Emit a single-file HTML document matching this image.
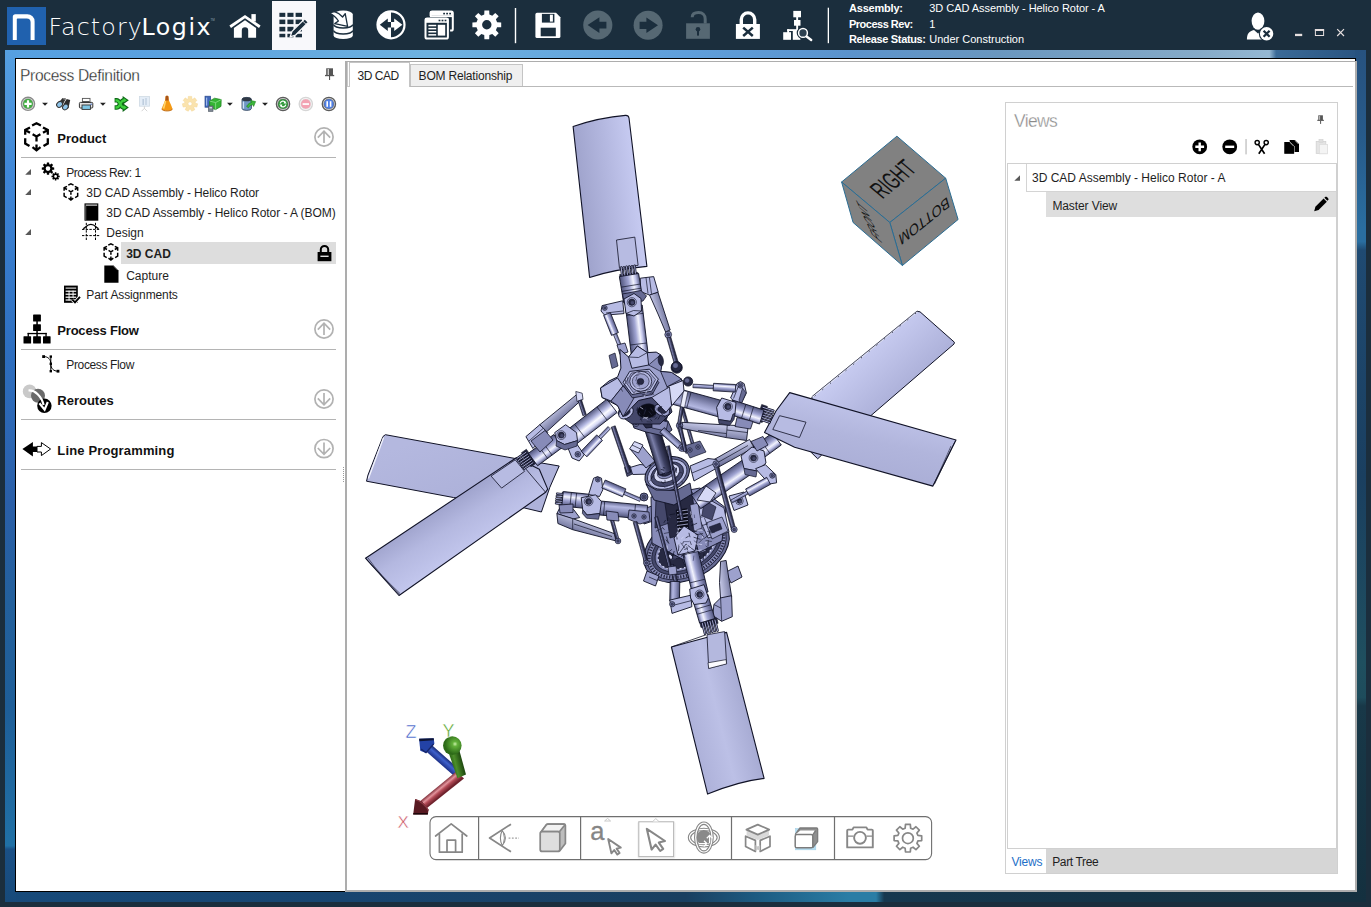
<!DOCTYPE html>
<html lang="en">
<head>
<meta charset="utf-8">
<title>FactoryLogix - Process Definition</title>
<style>
html,body{margin:0;padding:0;}
body{width:1371px;height:907px;overflow:hidden;background:#1b2e3d;font-family:"Liberation Sans",sans-serif;font-size:12px;color:#1e1e1e;}
#app{position:relative;width:1371px;height:907px;overflow:hidden;background:#1b2e3d;}
.abs{position:absolute;}
.t{position:absolute;white-space:nowrap;line-height:16px;}
svg{position:absolute;overflow:visible;}
/* window frame (glass band) */
#band-top{left:5px;top:50px;width:1361px;height:9px;background:linear-gradient(90deg,#56a0e1 0,#5aa1df 12%,#6eb2e0 31%,#5f9fdb 50%,#5b93cc 62%,#6a97bf 73%,#86abc8 88%,#95b8d3 92.9%,#3b6a97 93.4%,#27527f 100%);}
#band-left{left:5px;top:50px;width:11px;height:852px;background:linear-gradient(180deg,#56a0e1 0,#3f86d6 15%,#2e6fc0 35%,#2a5fa8 53%,#23609c 65%,#1e5e98 77%,#2070a5 93.4%,#1a5086 93.8%,#174a7a 100%);}
#band-right{left:1355px;top:50px;width:11px;height:852px;background:linear-gradient(180deg,#27527f 0,#275a8a 10%,#2a6ea0 21%,#2a6ea0 22.5%,#1f4a72 23.5%,#1a3f60 50%,#1f4f5f 72%,#1e4c5c 76%,#183848 77%,#14303f 100%);}
#band-bottom{left:5px;top:891px;width:1361px;height:11px;background:linear-gradient(90deg,#174a7a 0,#184570 25%,#1a3f60 50%,#1c5a80 55%,#2a7da5 62%,#2a7da5 64%,#16384f 64.6%,#14303f 100%);}
.hb{font-weight:bold;font-size:11px;color:#fff;letter-spacing:-0.2px;}
.hv{font-size:11px;color:#fff;}
.sh{font-weight:bold;font-size:13px;color:#111;}
.tr{font-size:12px;color:#1e1e1e;}
#client{left:15px;top:58px;width:1339px;height:832px;background:#fff;border:1px solid #000;}
</style>
</head>
<body>
<div id="app">
<div id="band-top" class="abs"></div>
<div id="band-bottom" class="abs"></div>
<div id="band-left" class="abs"></div>
<div id="band-right" class="abs"></div>
<div id="client" class="abs"></div>
<!--HEADER-->
<div class="abs" style="left:7px;top:7px;width:39px;height:38px;background:#2061ae;"></div>
<div class="abs" style="left:272px;top:1px;width:44px;height:49px;background:#f8f8fb;"></div>
<div class="t" id="lg1" style="left:48.4px;top:10.9px;line-height:32px;font-family:'DejaVu Sans Light','DejaVu Sans',sans-serif;font-weight:200;font-size:23.7px;color:#fff;letter-spacing:1.15px;">Factory</div>
<div class="t" id="lg2" style="left:141.5px;top:10.9px;line-height:32px;font-family:'DejaVu Sans',sans-serif;font-size:23.7px;color:#fff;letter-spacing:1.55px;">Logix</div>
<div class="t" style="left:210.5px;top:16.5px;line-height:6px;font-size:3px;color:#8fa0ad;">TM</div>
<div class="t hb" id="h1" style="left:849px;top:0px;">Assembly:</div>
<div class="t hb" id="h2" style="left:849px;top:15.6px;letter-spacing:-0.5px;">Process Rev:</div>
<div class="t hb" id="h3" style="left:849px;top:30.6px;letter-spacing:-0.35px;">Release Status:</div>
<div class="t hv" id="h4" style="left:929.3px;top:0px;letter-spacing:-0.05px;">3D CAD Assembly - Helico Rotor - A</div>
<div class="t hv" id="h5" style="left:929.3px;top:15.6px;">1</div>
<div class="t hv" id="h6" style="left:929.3px;top:30.6px;">Under Construction</div>
<svg id="hdr" width="1371" height="50" viewBox="0 0 1371 50" style="left:0;top:0;">
<g fill="#fff" stroke="none">
<!-- logo n -->
<path d="M12.8,40 V16.8 A2.6,2.6 0 0 1 15.4,14.2 H27.4 A7.2,7.2 0 0 1 34.6,21.4 V40 H30.6 V22.2 A3.8,3.8 0 0 0 26.8,18.4 H17.6 A0.8,0.8 0 0 0 16.8,19.2 V40 Z"/>
<!-- home -->
<path d="M245,14.9 L260.6,25.6 L259,27.9 L245,18.2 L231,27.9 L229.4,25.6 Z"/>
<rect x="251.4" y="14.1" width="4.4" height="7.4"/>
<path d="M233.9,28 L245,20.3 L256.1,28 V37.7 H248.2 V30.4 A3.2,3.2 0 0 0 241.8,30.4 V37.7 H233.9 Z"/>
<!-- db -->
<path d="M333.6,14.2 A9.6,3.6 0 0 1 352.8,14.2 V35.4 A9.6,3.6 0 0 1 333.6,35.4 Z"/>
<!-- circle arrows -->
<path d="M391,10.2 A14.6,14.6 0 0 0 391,39.4 Z"/>
<path d="M391,11.3 A13.5,13.5 0 0 1 391,38.3" fill="none" stroke="#fff" stroke-width="2.2"/>
<path d="M402.4,24.8 L394.2,18.6 V22 H391 V27.6 H394.2 V31 Z"/>
<!-- gear -->
<path fill-rule="evenodd" d="M484.24,14.51 L484.40,10.40 L489.20,10.40 L489.36,14.51 L492.27,15.72 L495.29,12.92 L498.68,16.31 L495.88,19.33 L497.09,22.24 L501.20,22.40 L501.20,27.20 L497.09,27.36 L495.88,30.27 L498.68,33.29 L495.29,36.68 L492.27,33.88 L489.36,35.09 L489.20,39.20 L484.40,39.20 L484.24,35.09 L481.33,33.88 L478.31,36.68 L474.92,33.29 L477.72,30.27 L476.51,27.36 L472.40,27.20 L472.40,22.40 L476.51,22.24 L477.72,19.33 L474.92,16.31 L478.31,12.92 L481.33,15.72Z M491.5,24.8 A4.7,4.7 0 1 0 482.1,24.8 A4.7,4.7 0 1 0 491.5,24.8Z"/>
<!-- separators -->
<rect x="514.8" y="8" width="1.4" height="35.2"/>
<rect x="827.7" y="7.7" width="1.3" height="35.5"/>
<!-- save -->
<path d="M537,12.8 H556 L560.4,17.2 V36.4 A1.6,1.6 0 0 1 558.8,38 H537 A1.6,1.6 0 0 1 535.4,36.4 V14.4 A1.6,1.6 0 0 1 537,12.8 Z"/>
<!-- lock-x -->
<rect x="735.9" y="24" width="24" height="14.9"/>
<path d="M741.3,24.5 V19.6 A6.7,6.7 0 0 1 754.7,19.6 V24.5" fill="none" stroke="#fff" stroke-width="3.4"/>
<!-- flow search -->
<rect x="793.3" y="10.9" width="7.7" height="6.4"/>
<rect x="796.2" y="17" width="1.9" height="14"/>
<rect x="794" y="20" width="6.5" height="5.7"/>
<rect x="787.2" y="29.2" width="11" height="1.8"/>
<rect x="787.2" y="29.2" width="1.9" height="4"/>
<rect x="783.2" y="32.2" width="7.8" height="7.6"/>
<rect x="792.8" y="30.6" width="7.6" height="9.2"/>
<!-- user -->
<ellipse cx="1258" cy="21.1" rx="6.4" ry="8.7"/>
<path d="M1246.9,39.6 C1247.2,33 1249,31.5 1254,30 L1258,33.5 L1262,30 C1266,31.3 1268,33 1268.5,39.6 Z"/>
</g>
<!-- dark details -->
<g fill="#1b2e3d" stroke="none">
<!-- grid -->
<rect x="279.4" y="12.8" width="5.9" height="4.1"/><rect x="287.4" y="12.8" width="6.1" height="4.1"/><rect x="295.6" y="12.8" width="6.4" height="4.1"/>
<rect x="279.4" y="19.6" width="5.9" height="4.5"/><rect x="287.4" y="19.6" width="6.1" height="4.5"/><rect x="295.6" y="19.6" width="6.4" height="4.5"/>
<rect x="279.4" y="26.8" width="5.9" height="4.6"/><rect x="287.4" y="26.8" width="6.1" height="4.6"/><rect x="295.6" y="26.8" width="6.4" height="4.6"/>
<rect x="279.4" y="33.8" width="5.9" height="3.5"/><rect x="287.4" y="33.8" width="6.1" height="3.5"/><rect x="295.6" y="33.8" width="6.4" height="3.5"/>
<!-- circle arrows left arrow -->
<path d="M379.8,24.8 L387.8,18.6 V22 H391 V27.6 H387.8 V31 Z"/>
<!-- save details -->
<rect x="541.9" y="13.9" width="12.5" height="8.7"/>
<rect x="540.7" y="27.7" width="15.1" height="8.6"/>
<!-- lock x -->
<path d="M743.2,27.6 L752.8,36 M752.8,27.6 L743.2,36" stroke="#1b2e3d" stroke-width="2.5" fill="none"/>
</g>
<rect x="549.9" y="14.7" width="3" height="6.9" fill="#fff"/>
<!-- pencil -->
<path d="M290.2,36.8 L292,31.4 L304.8,18.8 L308.4,22.2 L295.6,35 Z" fill="#1b2e3d" stroke="#f8f8fb" stroke-width="1.3" stroke-linejoin="round"/>
<path d="M302.6,21 L306.2,24.4" stroke="#f8f8fb" stroke-width="0.8"/>
<!-- db bands + arrow -->
<path d="M333.6,24.6 A9.6,3.4 0 0 0 352.8,24.6 M333.6,30.6 A9.6,3.4 0 0 0 352.8,30.6" fill="none" stroke="#1b2e3d" stroke-width="1.5"/>
<path d="M329.4,12.9 L334.6,11.6 C338,12.6 340.6,14.6 342.6,17 L345.2,13.6 L347.6,26.4 L334.8,23.6 L338.4,21 C336.8,18.2 334,15.6 329.4,12.9 Z" fill="#fff" stroke="#1b2e3d" stroke-width="1.3" stroke-linejoin="round"/>
<!-- windows -->
<g stroke="#fff" stroke-width="2" fill="#1b2e3d">
<rect x="430.6" y="11.5" width="22.2" height="19" rx="1.6"/>
<rect x="425.5" y="18.5" width="22.4" height="20" rx="1.6" stroke="#1b2e3d" stroke-width="4.4"/>
<rect x="425.5" y="18.5" width="22.4" height="20" rx="1.6"/>
</g>
<g fill="#fff">
<rect x="430" y="15.6" width="23" height="1.5"/>
<rect x="443.2" y="12.6" width="1.8" height="1.6" fill="#1b2e3d"/><rect x="446.2" y="12.6" width="1.8" height="1.6" fill="#1b2e3d"/><rect x="449.2" y="12.6" width="1.8" height="1.6" fill="#1b2e3d"/>
<rect x="430" y="11.2" width="23" height="4.6"/>
<rect x="443.2" y="12.8" width="1.8" height="1.6" fill="#1b2e3d"/><rect x="446.2" y="12.8" width="1.8" height="1.6" fill="#1b2e3d"/><rect x="449.2" y="12.8" width="1.8" height="1.6" fill="#1b2e3d"/>
<rect x="425" y="18" width="23.4" height="4.8"/>
<rect x="438.6" y="19.7" width="1.8" height="1.6" fill="#1b2e3d"/><rect x="441.6" y="19.7" width="1.8" height="1.6" fill="#1b2e3d"/><rect x="444.6" y="19.7" width="1.8" height="1.6" fill="#1b2e3d"/>
<rect x="428.4" y="24.8" width="7.8" height="1.5"/><rect x="428.4" y="27.9" width="7.8" height="1.5"/><rect x="428.4" y="31" width="7.8" height="1.5"/><rect x="428.4" y="34.1" width="7.8" height="1.5"/>
<rect x="437.8" y="24.8" width="7.4" height="10.8"/>
</g>
<!-- back / forward (disabled) -->
<g fill="#566873">
<circle cx="597.8" cy="25" r="14.6"/>
<circle cx="648.1" cy="25.3" r="14.5"/>
<rect x="686.1" y="23.3" width="23.8" height="15.5"/>
<path d="M692.2,17.2 C692.2,13.4 695.4,12.6 698.6,12.6 C702.6,12.6 705.2,15 705.2,19 V23.6" fill="none" stroke="#566873" stroke-width="3"/>
</g>
<g fill="#1b2e3d">
<path d="M587.6,25.1 L599.4,17.3 V21.8 H606.4 V28.5 H599.4 V32.9 Z"/>
<path d="M658,25.3 L646.4,17.6 V21.7 H639.6 V29 H646.4 V33 Z"/>
<circle cx="698" cy="29.2" r="2.3"/><rect x="697" y="29.2" width="2" height="6.4"/>
</g>
<!-- magnifier -->
<circle cx="803" cy="32.9" r="5.2" fill="#1b2e3d" stroke="#1b2e3d" stroke-width="2.2"/>
<path d="M806.4,36.4 L811.6,40.4" stroke="#1b2e3d" stroke-width="4.6" stroke-linecap="round"/>
<circle cx="803" cy="32.9" r="4.4" fill="#2c4050" stroke="#fff" stroke-width="1.5"/>
<path d="M806.6,36.5 L811.2,40" stroke="#fff" stroke-width="2.4" stroke-linecap="round"/>
<!-- user badge -->
<circle cx="1266.6" cy="33.7" r="7.8" fill="#1b2e3d"/>
<circle cx="1266.6" cy="33.7" r="6.7" fill="#fff"/>
<path d="M1263.6,30.7 L1269.6,36.7 M1269.6,30.7 L1263.6,36.7" stroke="#1b2e3d" stroke-width="2.3"/>
<!-- window buttons -->
<rect x="1295" y="33.8" width="7.2" height="2.3" fill="#e6dfdf"/>
<rect x="1315.4" y="29.9" width="8.2" height="5.6" fill="none" stroke="#e6dfdf" stroke-width="1"/>
<rect x="1314.9" y="29" width="9.2" height="2" fill="#e6dfdf"/>
<path d="M1337.2,29.2 L1344,36 M1344,29.2 L1337.2,36" stroke="#e6dfdf" stroke-width="1.2"/>
</svg>
<!--/HEADER-->
<!--LEFT-->
<div class="t" id="l0" style="left:20px;top:67.5px;font-size:15.6px;color:#222;-webkit-text-stroke:0.3px #fff;letter-spacing:-0.34px;">Process Definition</div>
<div class="abs" style="left:21px;top:157px;width:315px;height:1px;background:#b4b4b4;"></div>
<div class="abs" style="left:21px;top:349px;width:315px;height:1px;background:#b4b4b4;"></div>
<div class="abs" style="left:21px;top:419px;width:315px;height:1px;background:#b4b4b4;"></div>
<div class="abs" style="left:21px;top:469px;width:315px;height:1px;background:#b4b4b4;"></div>
<div class="abs" style="left:121px;top:242px;width:215px;height:22px;background:#dddddd;"></div>
<div class="t sh" id="l1" style="left:57.3px;top:131.1px;">Product</div>
<div class="t sh" id="l2" style="left:57.3px;top:323.1px;letter-spacing:-0.2px;">Process Flow</div>
<div class="t sh" id="l3" style="left:57.3px;top:393.1px;">Reroutes</div>
<div class="t sh" id="l4" style="left:57.3px;top:443.1px;letter-spacing:0.15px;">Line Programming</div>
<div class="t tr" id="l5" style="left:66.3px;top:165.1px;letter-spacing:-0.5px;">Process Rev: 1</div>
<div class="t tr" id="l6" style="left:86.3px;top:185.1px;letter-spacing:-0.09px;">3D CAD Assembly - Helico Rotor</div>
<div class="t tr" id="l7" style="left:106.3px;top:205.0px;letter-spacing:-0.05px;">3D CAD Assembly - Helico Rotor - A (BOM)</div>
<div class="t tr" id="l8" style="left:106.3px;top:225.0px;">Design</div>
<div class="t tr" id="l9" style="left:126.2px;top:245.6px;font-weight:bold;">3D CAD</div>
<div class="t tr" id="l10" style="left:126.2px;top:267.5px;">Capture</div>
<div class="t tr" id="l11" style="left:86.3px;top:286.6px;letter-spacing:-0.12px;">Part Assignments</div>
<div class="t tr" id="l12" style="left:66.3px;top:357.1px;letter-spacing:-0.36px;">Process Flow</div>
<svg id="lsvg" width="1371" height="907" viewBox="0 0 1371 907" style="left:0;top:0;">
<g fill="#555"><rect x="326.2" y="68.3" width="6.8" height="6.8"/><rect x="325" y="74.9" width="9.2" height="1.3"/><rect x="329" y="76" width="1.1" height="4"/><rect x="327.6" y="69" width="1.4" height="6" fill="#ccc"/></g>
<circle cx="324" cy="137" r="9.1" fill="none" stroke="#b2b2b2" stroke-width="1.7"/>
<path d="M324,143 V131.4 M317.8,137.6 L324,131.2 L330.2,137.6" fill="none" stroke="#b2b2b2" stroke-width="1.7"/>
<circle cx="324" cy="329" r="9.1" fill="none" stroke="#b2b2b2" stroke-width="1.7"/>
<path d="M324,335 V323.4 M317.8,329.6 L324,323.2 L330.2,329.6" fill="none" stroke="#b2b2b2" stroke-width="1.7"/>
<circle cx="324" cy="399" r="9.1" fill="none" stroke="#b2b2b2" stroke-width="1.7"/>
<path d="M324,393 V404.6 M317.8,398.4 L324,404.8 L330.2,398.4" fill="none" stroke="#b2b2b2" stroke-width="1.7"/>
<circle cx="324" cy="448.6" r="9.1" fill="none" stroke="#b2b2b2" stroke-width="1.7"/>
<path d="M324,442.6 V454.20000000000005 M317.8,448.0 L324,454.40000000000003 L330.2,448.0" fill="none" stroke="#b2b2b2" stroke-width="1.7"/>
<path d="M32.10,125.50 L36.50,123.20 L40.90,125.50 M30.00,127.40 L25.20,129.90 L25.20,134.70 M25.60,130.20 L30.00,132.70 M43.00,127.40 L47.80,129.90 L47.80,134.70 M47.40,130.20 L43.00,132.70 M32.60,134.30 L36.50,136.50 L40.40,134.30 M36.50,136.50 L36.50,141.60 M25.20,138.30 L25.20,143.60 L29.50,146.10 M47.80,138.30 L47.80,143.60 L43.50,146.10 M36.50,144.40 L36.50,150.20 M32.50,147.20 L36.50,150.40 L40.50,147.20" fill="none" stroke="#000" stroke-width="2.3" stroke-linejoin="miter"/>
<path d="M68.26,185.18 L70.90,183.80 L73.54,185.18 M67.00,186.32 L64.12,187.82 L64.12,190.70 M64.36,188.00 L67.00,189.50 M74.80,186.32 L77.68,187.82 L77.68,190.70 M77.44,188.00 L74.80,189.50 M68.56,190.46 L70.90,191.78 L73.24,190.46 M70.90,191.78 L70.90,194.84 M64.12,192.86 L64.12,196.04 L66.70,197.54 M77.68,192.86 L77.68,196.04 L75.10,197.54 M70.90,196.52 L70.90,200.00 M68.50,198.20 L70.90,200.12 L73.30,198.20" fill="none" stroke="#000" stroke-width="1.5" stroke-linejoin="miter"/>
<path d="M108.26,245.18 L110.90,243.80 L113.54,245.18 M107.00,246.32 L104.12,247.82 L104.12,250.70 M104.36,248.00 L107.00,249.50 M114.80,246.32 L117.68,247.82 L117.68,250.70 M117.44,248.00 L114.80,249.50 M108.56,250.46 L110.90,251.78 L113.24,250.46 M110.90,251.78 L110.90,254.84 M104.12,252.86 L104.12,256.04 L106.70,257.54 M117.68,252.86 L117.68,256.04 L115.10,257.54 M110.90,256.52 L110.90,260.00 M108.50,258.20 L110.90,260.12 L113.30,258.20" fill="none" stroke="#000" stroke-width="1.5" stroke-linejoin="miter"/>
<path d="M25.2,174.79999999999998 L31,174.79999999999998 L31,169.0 Z" fill="#595959"/>
<path d="M25.2,194.9 L31,194.9 L31,189.10000000000002 Z" fill="#595959"/>
<path d="M25.2,234.9 L31,234.9 L31,229.10000000000002 Z" fill="#595959"/>
<path d="M46.75,164.17 L46.89,162.40 L49.11,162.40 L49.25,164.17 L50.25,164.59 L51.60,163.43 L53.17,165.00 L52.01,166.35 L52.43,167.35 L54.20,167.49 L54.20,169.71 L52.43,169.85 L52.01,170.85 L53.17,172.20 L51.60,173.77 L50.25,172.61 L49.25,173.03 L49.11,174.80 L46.89,174.80 L46.75,173.03 L45.75,172.61 L44.40,173.77 L42.83,172.20 L43.99,170.85 L43.57,169.85 L41.80,169.71 L41.80,167.49 L43.57,167.35 L43.99,166.35 L42.83,165.00 L44.40,163.43 L45.75,164.59Z M50.30,168.60 A2.3,2.3 0 1 0 45.70,168.60 A2.3,2.3 0 1 0 50.30,168.60Z" fill="#000" fill-rule="evenodd"/>
<path d="M54.79,173.51 L54.86,172.27 L56.34,172.27 L56.41,173.51 L57.07,173.78 L58.00,172.95 L59.05,174.00 L58.22,174.93 L58.49,175.59 L59.73,175.66 L59.73,177.14 L58.49,177.21 L58.22,177.87 L59.05,178.80 L58.00,179.85 L57.07,179.02 L56.41,179.29 L56.34,180.53 L54.86,180.53 L54.79,179.29 L54.13,179.02 L53.20,179.85 L52.15,178.80 L52.98,177.87 L52.71,177.21 L51.47,177.14 L51.47,175.66 L52.71,175.59 L52.98,174.93 L52.15,174.00 L53.20,172.95 L54.13,173.78Z M57.00,176.40 A1.4,1.4 0 1 0 54.20,176.40 A1.4,1.4 0 1 0 57.00,176.40Z" fill="#000" fill-rule="evenodd"/>
<rect x="84.5" y="203.4" width="13.8" height="17.3" fill="#000"/><rect x="85.6" y="204.6" width="11.6" height="1" fill="#fff"/><rect x="85.4" y="206" width="0.8" height="14" fill="#777"/>
<g fill="none" stroke="#000" stroke-width="1"><path d="M86.3,222.8 V241 M95.5,222.8 V241 M82,229.4 H99.8 M82,235.6 H99.8" stroke-dasharray="2.4,1.3"/><path d="M83.2,228.6 C85.5,228 86.6,224.4 90.9,224.4 C95.2,224.4 96.3,228 98.6,228.6" stroke-width="1.2"/></g>
<path d="M104.3,265.4 H113.6 L118.5,270.4 V282.7 H104.3 Z" fill="#000"/><path d="M113.8,266.2 L117.8,270.2" stroke="#aaa" stroke-width="0.8"/>
<g><rect x="64" y="285.6" width="13.8" height="17.2" fill="#000"/><g fill="#fff"><rect x="65.6" y="287.6" width="10.6" height="1"/><rect x="65.6" y="290.6" width="10.6" height="1.2"/><rect x="65.6" y="293.6" width="10.6" height="1.2"/><rect x="65.6" y="296.6" width="10.6" height="1.2"/><rect x="65.6" y="299.4" width="6" height="1.2"/><rect x="68.6" y="290.6" width="0.9" height="10"/><rect x="72.6" y="290.6" width="0.9" height="7"/></g><path d="M72.4,299.6 L75,302.4 L80,296.8" fill="none" stroke="#fff" stroke-width="3.6"/><path d="M72.4,299.6 L75,302.4 L80,296.8" fill="none" stroke="#000" stroke-width="1.9"/></g>
<g><rect x="317.6" y="252" width="13.8" height="9.2" fill="#000"/><path d="M320.8,252.4 V249.6 A3.7,3.7 0 0 1 328.2,249.6 V252.4" fill="none" stroke="#000" stroke-width="2"/><rect x="320.4" y="255.6" width="8.2" height="1.4" fill="#ddd"/></g>
<g fill="#000"><rect x="33.1" y="314.6" width="7.8" height="6.9" rx="0.6"/><rect x="33.1" y="324.2" width="7.8" height="6.9" rx="0.6"/><rect x="36.3" y="321" width="1.5" height="16"/><rect x="27.6" y="332.9" width="19.1" height="1.3"/><rect x="27.6" y="332.9" width="1.3" height="4"/><rect x="45.4" y="332.9" width="1.3" height="4"/><rect x="23.5" y="336.2" width="7.6" height="7.4" rx="0.6"/><rect x="33.1" y="336.2" width="7.8" height="7.4" rx="0.6"/><rect x="43" y="336.2" width="7.6" height="7.4" rx="0.6"/></g>
<g fill="#000"><path d="M43.6,356.6 C48,356.6 50.8,359 50.8,363.8 C50.8,368.6 53.6,371.2 58,371.2 M50.8,356.6 V371.2" fill="none" stroke="#000" stroke-width="1"/><rect x="42.2" y="355.2" width="2.8" height="2.8"/><rect x="49.6" y="355.4" width="2.4" height="2.4"/><rect x="49.6" y="362.6" width="2.4" height="2.4"/><rect x="49.6" y="370" width="2.4" height="2.4"/><rect x="56.6" y="369.8" width="2.8" height="2.8"/></g>
<g><circle cx="29.6" cy="391.4" r="6.8" fill="#c9c9c9"/><circle cx="38" cy="395.7" r="7" fill="#6a6a6a"/><circle cx="44.4" cy="405.8" r="7.2" fill="#000"/><path d="M28.5,390.5 C35,390 41.5,396 43.6,405" fill="none" stroke="#fff" stroke-width="2.2"/><path d="M39.4,403.2 L44.6,409.6 L47.8,402" fill="none" stroke="#fff" stroke-width="2.2"/></g>
<g><path d="M22.4,449 L32.9,442 V446.4 H37 V452 H32.9 V456.4 Z" fill="#000"/><path d="M37,446.4 H41.4 V442.6 L50.6,449 L41.4,455.6 V452 H37 Z" fill="#fff" stroke="#000" stroke-width="1"/></g>
<rect x="343" y="467" width="1" height="1" fill="#999"/>
<rect x="343" y="469" width="1" height="1" fill="#999"/>
<rect x="343" y="471" width="1" height="1" fill="#999"/>
<rect x="343" y="473" width="1" height="1" fill="#999"/>
<rect x="343" y="475" width="1" height="1" fill="#999"/>
<rect x="343" y="477" width="1" height="1" fill="#999"/>
<rect x="343" y="479" width="1" height="1" fill="#999"/>
<rect x="343" y="481" width="1" height="1" fill="#999"/>
</svg>
<svg id="ltb" width="340" height="24" viewBox="16 92 340 24" style="left:16px;top:92px;">
<circle cx="28" cy="103.8" r="6.6" fill="#fff" stroke="#8a8a8a" stroke-width="1.4"/><circle cx="28" cy="103.8" r="5.1" fill="#3fae3f" stroke="#8a8a8a" stroke-width="0.6"/>
<path d="M24.4,103.8 H31.6 M28,100.2 V107.4" stroke="#fff" stroke-width="2.2"/>
<path d="M42.1,102.8 H47.9 L45,105.7 Z" fill="#222"/>
<path d="M100.0,102.8 H105.80000000000001 L102.9,105.7 Z" fill="#222"/>
<path d="M227.0,102.8 H232.8 L229.9,105.7 Z" fill="#222"/>
<path d="M262.1,102.8 H267.9 L265,105.7 Z" fill="#222"/>
<g><path d="M58.5,103 L62.5,98 L66,98.6 L62,106 Z" fill="#333"/><path d="M63.5,104.5 L66.6,99 L70.2,100 L68.5,108 Z" fill="#2b2b2b"/><ellipse cx="59.6" cy="104.4" rx="3.2" ry="2.6" transform="rotate(-40 59.6 104.4)" fill="#8ec4ea" stroke="#333" stroke-width="1"/><ellipse cx="65.4" cy="107" rx="3.1" ry="2.5" transform="rotate(-40 65.4 107)" fill="#8ec4ea" stroke="#333" stroke-width="1"/><path d="M62.8,98.6 L66.4,99.6" stroke="#999" stroke-width="1"/></g>
<g><rect x="82.4" y="98.4" width="7.6" height="5" fill="#fff" stroke="#555" stroke-width="0.9"/><rect x="79.4" y="102.4" width="13.4" height="5.6" rx="1" fill="#e4e4e4" stroke="#333" stroke-width="1"/><rect x="82" y="105" width="8.4" height="4.4" fill="#7ec7e6" stroke="#333" stroke-width="0.9"/><rect x="82.6" y="101.2" width="7" height="1.6" fill="#333"/><rect x="90.6" y="103.6" width="1.2" height="1.2" fill="#36c"/></g>
<g fill="none" stroke="#0f6a18" stroke-width="4.6"><path d="M114.6,100.3 H116.5 C120.5,100.3 120,107.5 124,107.5 M114.6,107.5 H116.5 C120.5,107.5 120,100.3 124,100.3"/></g><g fill="#0f6a18"><path d="M122.6,95.9 L128.8,100.3 L122.6,104.7 Z"/><path d="M122.6,103.1 L128.8,107.5 L122.6,111.9 Z"/></g><g fill="none" stroke="#3ccf3c" stroke-width="2.3"><path d="M115.4,100.3 H116.5 C120.5,100.3 120,107.5 124,107.5 M115.4,107.5 H116.5 C120.5,107.5 120,100.3 124,100.3"/></g><g fill="#3ccf3c"><path d="M123.6,98 L126.9,100.3 L123.6,102.6 Z"/><path d="M123.6,105.2 L126.9,107.5 L123.6,109.8 Z"/></g>
<g opacity="0.55"><rect x="139.4" y="96.6" width="10.2" height="9.6" fill="#cfe0f2" stroke="#a9bccf" stroke-width="0.8"/><rect x="142.4" y="99" width="1.6" height="6" fill="#8aa6c4"/><rect x="145.2" y="98" width="1.6" height="7" fill="#9ab2cc"/><path d="M144.4,106.2 V109 M144.4,108.4 L141.6,111.2 M144.4,108.4 L147.2,111.2" stroke="#aaa" stroke-width="0.9" fill="none"/></g>
<g><path d="M165.6,96.6 C165.6,95.6 168.4,95.6 168.4,96.6 L168.8,100 C170,103 171.6,105.4 172.4,108.8 C172.4,111.4 161.8,111.4 161.8,108.8 C162.6,105.4 164.2,103 165.2,100 Z" fill="#f59a14"/><path d="M165.6,96.4 C165.6,95.4 168.4,95.4 168.4,96.4 L168.6,100.4 H165.4 Z" fill="#a8541a"/><path d="M165.4,101 C165,104 164.2,106 163.6,108.6" stroke="#ffd56a" stroke-width="1.6" fill="none"/><path d="M161.8,108.8 C161.8,111.6 172.4,111.6 172.4,108.8" fill="none" stroke="#c26a0c" stroke-width="1"/></g>
<path d="M188.22,98.70 L188.31,96.39 L191.69,96.39 L191.78,98.70 L192.87,99.23 L194.74,97.86 L196.85,100.50 L195.10,102.02 L195.37,103.20 L197.60,103.80 L196.85,107.10 L194.57,106.67 L193.82,107.62 L194.74,109.74 L191.69,111.21 L190.60,109.17 L189.40,109.17 L188.31,111.21 L185.26,109.74 L186.18,107.62 L185.43,106.67 L183.15,107.10 L182.40,103.80 L184.63,103.20 L184.90,102.02 L183.15,100.50 L185.26,97.86 L187.13,99.23Z M192,103.8 A2,2 0 1 0 188,103.8 A2,2 0 1 0 192,103.8Z" fill="#fae3ae" fill-rule="evenodd" stroke="#f3d493" stroke-width="0.5"/>
<g><rect x="205" y="96.2" width="5.6" height="11" fill="#3f66b8" stroke="#2c4a8c" stroke-width="0.7"/><rect x="206" y="97.6" width="1.2" height="8" fill="#9db7ea"/><path d="M209.6,101 L214.6,98.2 L221.2,99.6 L221,106.4 L215.6,109.6 L209.8,107.6 Z" fill="#35b535" stroke="#1d7c1d" stroke-width="0.7"/><path d="M209.6,101 L215.6,102.6 L221.2,99.6 M215.6,102.6 V109.6" fill="none" stroke="#8de08d" stroke-width="0.8"/><rect x="208.4" y="106" width="4.6" height="5.4" fill="#7d8794" stroke="#4d5560" stroke-width="0.6"/><rect x="209.4" y="107" width="2.6" height="1.4" fill="#cfd8e2"/></g>
<g><path d="M242,99.4 A4.7,2 0 0 1 251.4,99.4 V108.4 A4.7,2 0 0 1 242,108.4 Z" fill="#6f98c6" stroke="#2d3f57" stroke-width="0.8"/><ellipse cx="246.7" cy="99.2" rx="4.7" ry="2" fill="#2f3946"/><path d="M243.4,101.6 V108.6" stroke="#cfe2f6" stroke-width="1.4"/><path d="M246.6,106.4 C248.4,103.4 250,102.8 251.4,102.6 L250.4,100.4 L255.6,101.6 L253.6,106.4 L252.6,104.6 C251,105 249.4,106 248.4,107.8 Z" fill="#3cb83c" stroke="#1d7c1d" stroke-width="0.6"/></g>
<circle cx="283" cy="104" r="6.6" fill="#fff" stroke="#5c5c5c" stroke-width="1.4"/><circle cx="283" cy="104" r="5.1" fill="#2f9a3a" stroke="#555" stroke-width="0.6"/>
<path d="M280.2,103.4 A2.9,2.9 0 0 1 285.4,102.4 M285.8,104.6 A2.9,2.9 0 0 1 280.6,105.6" fill="none" stroke="#fff" stroke-width="1.3"/><path d="M284.6,101 L286.8,103.4 L283.6,103.6 Z M281.4,107 L279.2,104.6 L282.4,104.4 Z" fill="#fff"/>
<circle cx="305.8" cy="104" r="6.6" fill="#fff" stroke="#d6d6d6" stroke-width="1.4"/><circle cx="305.8" cy="104" r="5.1" fill="#f3a3b3" stroke="#dcdcdc" stroke-width="0.6"/>
<rect x="302.6" y="103.2" width="6.4" height="1.7" fill="#fff"/>
<circle cx="328.9" cy="104" r="6.6" fill="#fff" stroke="#5c5c5c" stroke-width="1.4"/><circle cx="328.9" cy="104" r="5.1" fill="#4f7fe6" stroke="#555" stroke-width="0.6"/>
<rect x="326.4" y="101.2" width="1.6" height="5.6" fill="#fff"/><rect x="329.8" y="101.2" width="1.6" height="5.6" fill="#fff"/>
</svg>
<!--/LEFT-->
<!--CENTER-->
<div class="abs" style="left:345px;top:61px;width:1008px;height:828px;border:solid #adadad;border-width:1px 2px 2px 2px;background:#fff;box-sizing:content-box;"></div>
<div class="abs" style="left:347px;top:86px;width:1006px;height:1px;background:#b9b9b9;"></div>
<div class="abs" style="left:347px;top:62px;width:3px;height:25px;border:1px solid #c9c9c9;border-top:none;box-sizing:border-box;background:#fff;"></div>
<div class="abs" style="left:410px;top:64px;width:113px;height:22px;background:#efefef;border:1px solid #c4c4c4;border-bottom:none;box-sizing:border-box;"></div>
<div class="abs" style="left:349px;top:62px;width:61px;height:25px;background:#fff;border:1px solid #c4c4c4;border-bottom:none;box-sizing:border-box;"></div>
<div class="t" id="c1" style="left:357.6px;top:67.7px;font-size:12px;letter-spacing:-0.5px;">3D CAD</div>
<div class="t" id="c2" style="left:418.6px;top:67.7px;font-size:12px;letter-spacing:-0.2px;">BOM Relationship</div>
<!--MODEL_START--><svg id="model" width="1371" height="907" viewBox="0 0 1371 907" style="left:0;top:0;">
<defs><linearGradient id="g1" gradientUnits="userSpaceOnUse" x1="860.0" y1="350.0" x2="905.0" y2="400.0"><stop offset="0" stop-color="#c9cdf2"/><stop offset="1" stop-color="#a9add6"/></linearGradient><linearGradient id="g2" gradientUnits="userSpaceOnUse" x1="420.0" y1="440.0" x2="440.0" y2="500.0"><stop offset="0" stop-color="#b4b8df"/><stop offset="1" stop-color="#aeb2da"/></linearGradient><linearGradient id="g3" gradientUnits="userSpaceOnUse" x1="690.0" y1="720.0" x2="745.0" y2="706.0"><stop offset="0" stop-color="#aeb2da"/><stop offset="0.5" stop-color="#bcc0e6"/><stop offset="1" stop-color="#a8acd4"/></linearGradient><linearGradient id="g4" gradientUnits="userSpaceOnUse" x1="620.2" y1="502.8" x2="618.9" y2="516.8"><stop offset="0" stop-color="#5f638b"/><stop offset="0.3" stop-color="#b4b8e2"/><stop offset="0.6" stop-color="#8f93c0"/><stop offset="1" stop-color="#50547a"/></linearGradient><linearGradient id="g5" gradientUnits="userSpaceOnUse" x1="576.0" y1="492.9" x2="574.5" y2="507.3"><stop offset="0" stop-color="#5a5e87"/><stop offset="0.2" stop-color="#c2c5ea"/><stop offset="0.34" stop-color="#f2f3fd"/><stop offset="0.58" stop-color="#a1a5d3"/><stop offset="1" stop-color="#50547c"/></linearGradient><linearGradient id="g6" gradientUnits="userSpaceOnUse" x1="631.6" y1="497.9" x2="633.0" y2="494.8"><stop offset="0" stop-color="#5f638b"/><stop offset="0.3" stop-color="#b4b8e2"/><stop offset="0.6" stop-color="#8f93c0"/><stop offset="1" stop-color="#50547a"/></linearGradient><linearGradient id="g7" gradientUnits="userSpaceOnUse" x1="612.1" y1="492.4" x2="615.5" y2="484.5"><stop offset="0" stop-color="#5a5e87"/><stop offset="0.2" stop-color="#c2c5ea"/><stop offset="0.34" stop-color="#f2f3fd"/><stop offset="0.58" stop-color="#a1a5d3"/><stop offset="1" stop-color="#50547c"/></linearGradient><linearGradient id="g8" gradientUnits="userSpaceOnUse" x1="590.0" y1="518.0" x2="584.0" y2="536.0"><stop offset="0" stop-color="#d6d9f6"/><stop offset="1" stop-color="#666a93"/></linearGradient><linearGradient id="g9" gradientUnits="userSpaceOnUse" x1="616.2" y1="529.0" x2="613.0" y2="530.0"><stop offset="0" stop-color="#2b2d47"/><stop offset="0.3" stop-color="#7a7ea8"/><stop offset="0.6" stop-color="#3f4264"/><stop offset="1" stop-color="#191a2e"/></linearGradient><linearGradient id="g10" gradientUnits="userSpaceOnUse" x1="730.0" y1="445.0" x2="735.0" y2="462.0"><stop offset="0" stop-color="#d6d9f6"/><stop offset="1" stop-color="#666a93"/></linearGradient><linearGradient id="g11" gradientUnits="userSpaceOnUse" x1="728.0" y1="490.0" x2="718.7" y2="476.4"><stop offset="0" stop-color="#5a5e87"/><stop offset="0.2" stop-color="#c2c5ea"/><stop offset="0.34" stop-color="#f2f3fd"/><stop offset="0.58" stop-color="#a1a5d3"/><stop offset="1" stop-color="#50547c"/></linearGradient><linearGradient id="g12" gradientUnits="userSpaceOnUse" x1="769.9" y1="453.3" x2="761.1" y2="441.2"><stop offset="0" stop-color="#5a5e87"/><stop offset="0.2" stop-color="#c2c5ea"/><stop offset="0.34" stop-color="#f2f3fd"/><stop offset="0.58" stop-color="#a1a5d3"/><stop offset="1" stop-color="#50547c"/></linearGradient><linearGradient id="g13" gradientUnits="userSpaceOnUse" x1="738.9" y1="495.6" x2="740.4" y2="498.4"><stop offset="0" stop-color="#5f638b"/><stop offset="0.3" stop-color="#b4b8e2"/><stop offset="0.6" stop-color="#8f93c0"/><stop offset="1" stop-color="#50547a"/></linearGradient><linearGradient id="g14" gradientUnits="userSpaceOnUse" x1="756.1" y1="483.2" x2="760.0" y2="490.2"><stop offset="0" stop-color="#5a5e87"/><stop offset="0.2" stop-color="#c2c5ea"/><stop offset="0.34" stop-color="#f2f3fd"/><stop offset="0.58" stop-color="#a1a5d3"/><stop offset="1" stop-color="#50547c"/></linearGradient><linearGradient id="g15" gradientUnits="userSpaceOnUse" x1="717.0" y1="580.0" x2="732.0" y2="578.0"><stop offset="0" stop-color="#d6d9f6"/><stop offset="1" stop-color="#666a93"/></linearGradient><linearGradient id="g16" gradientUnits="userSpaceOnUse" x1="672.3" y1="573.8" x2="675.7" y2="573.0"><stop offset="0" stop-color="#2b2d47"/><stop offset="0.3" stop-color="#7a7ea8"/><stop offset="0.6" stop-color="#3f4264"/><stop offset="1" stop-color="#191a2e"/></linearGradient><linearGradient id="g17" gradientUnits="userSpaceOnUse" x1="670.0" y1="591.1" x2="679.6" y2="591.3"><stop offset="0" stop-color="#5f638b"/><stop offset="0.3" stop-color="#b4b8e2"/><stop offset="0.6" stop-color="#8f93c0"/><stop offset="1" stop-color="#50547a"/></linearGradient><linearGradient id="g18" gradientUnits="userSpaceOnUse" x1="686.6" y1="569.8" x2="701.8" y2="566.1"><stop offset="0" stop-color="#5a5e87"/><stop offset="0.2" stop-color="#c2c5ea"/><stop offset="0.34" stop-color="#f2f3fd"/><stop offset="0.58" stop-color="#a1a5d3"/><stop offset="1" stop-color="#50547c"/></linearGradient><linearGradient id="g19" gradientUnits="userSpaceOnUse" x1="696.0" y1="611.0" x2="711.4" y2="606.5"><stop offset="0" stop-color="#5a5e87"/><stop offset="0.2" stop-color="#c2c5ea"/><stop offset="0.34" stop-color="#f2f3fd"/><stop offset="0.58" stop-color="#a1a5d3"/><stop offset="1" stop-color="#50547c"/></linearGradient><linearGradient id="g20" gradientUnits="userSpaceOnUse" x1="638.7" y1="542.3" x2="642.6" y2="541.3"><stop offset="0" stop-color="#2b2d47"/><stop offset="0.3" stop-color="#7a7ea8"/><stop offset="0.6" stop-color="#3f4264"/><stop offset="1" stop-color="#191a2e"/></linearGradient><linearGradient id="g21" gradientUnits="userSpaceOnUse" x1="661.7" y1="543.0" x2="664.8" y2="542.2"><stop offset="0" stop-color="#2b2d47"/><stop offset="0.3" stop-color="#7a7ea8"/><stop offset="0.6" stop-color="#3f4264"/><stop offset="1" stop-color="#191a2e"/></linearGradient><linearGradient id="g22" gradientUnits="userSpaceOnUse" x1="651.9" y1="452.7" x2="665.7" y2="448.3"><stop offset="0" stop-color="#2b2d47"/><stop offset="0.3" stop-color="#7a7ea8"/><stop offset="0.6" stop-color="#3f4264"/><stop offset="1" stop-color="#191a2e"/></linearGradient><linearGradient id="g23" gradientUnits="userSpaceOnUse" x1="668.8" y1="440.4" x2="673.2" y2="435.6"><stop offset="0" stop-color="#5f638b"/><stop offset="0.3" stop-color="#b4b8e2"/><stop offset="0.6" stop-color="#8f93c0"/><stop offset="1" stop-color="#50547a"/></linearGradient><linearGradient id="g24" gradientUnits="userSpaceOnUse" x1="619.2" y1="450.3" x2="623.1" y2="449.0"><stop offset="0" stop-color="#2b2d47"/><stop offset="0.3" stop-color="#7a7ea8"/><stop offset="0.6" stop-color="#3f4264"/><stop offset="1" stop-color="#191a2e"/></linearGradient><linearGradient id="g25" gradientUnits="userSpaceOnUse" x1="723.0" y1="498.7" x2="727.2" y2="497.5"><stop offset="0" stop-color="#2b2d47"/><stop offset="0.3" stop-color="#7a7ea8"/><stop offset="0.6" stop-color="#3f4264"/><stop offset="1" stop-color="#191a2e"/></linearGradient><linearGradient id="g26" gradientUnits="userSpaceOnUse" x1="681.3" y1="439.5" x2="684.1" y2="438.5"><stop offset="0" stop-color="#2b2d47"/><stop offset="0.3" stop-color="#7a7ea8"/><stop offset="0.6" stop-color="#3f4264"/><stop offset="1" stop-color="#191a2e"/></linearGradient><linearGradient id="g27" gradientUnits="userSpaceOnUse" x1="685.9" y1="425.6" x2="688.7" y2="424.7"><stop offset="0" stop-color="#2b2d47"/><stop offset="0.3" stop-color="#7a7ea8"/><stop offset="0.6" stop-color="#3f4264"/><stop offset="1" stop-color="#191a2e"/></linearGradient><linearGradient id="g28" gradientUnits="userSpaceOnUse" x1="673.5" y1="483.3" x2="676.5" y2="482.7"><stop offset="0" stop-color="#2b2d47"/><stop offset="0.3" stop-color="#7a7ea8"/><stop offset="0.6" stop-color="#3f4264"/><stop offset="1" stop-color="#191a2e"/></linearGradient><linearGradient id="g29" gradientUnits="userSpaceOnUse" x1="580.0" y1="200.0" x2="638.0" y2="193.0"><stop offset="0" stop-color="#9fa3cc"/><stop offset="0.55" stop-color="#b4b8e0"/><stop offset="1" stop-color="#c6caf1"/></linearGradient><linearGradient id="g30" gradientUnits="userSpaceOnUse" x1="850.0" y1="400.0" x2="835.0" y2="470.0"><stop offset="0" stop-color="#c0c4ea"/><stop offset="0.5" stop-color="#b1b5dc"/><stop offset="1" stop-color="#aaaed6"/></linearGradient><linearGradient id="g31" gradientUnits="userSpaceOnUse" x1="440.0" y1="500.0" x2="478.0" y2="560.0"><stop offset="0" stop-color="#9a9ec8"/><stop offset="0.4" stop-color="#b4b8e0"/><stop offset="1" stop-color="#c9cdf3"/></linearGradient><linearGradient id="g32" gradientUnits="userSpaceOnUse" x1="652.0" y1="312.0" x2="666.0" y2="308.0"><stop offset="0" stop-color="#d6d9f6"/><stop offset="1" stop-color="#666a93"/></linearGradient><linearGradient id="g33" gradientUnits="userSpaceOnUse" x1="670.7" y1="351.5" x2="674.8" y2="350.4"><stop offset="0" stop-color="#2b2d47"/><stop offset="0.3" stop-color="#7a7ea8"/><stop offset="0.6" stop-color="#3f4264"/><stop offset="1" stop-color="#191a2e"/></linearGradient><linearGradient id="g34" gradientUnits="userSpaceOnUse" x1="640.8" y1="286.4" x2="621.5" y2="289.6"><stop offset="0" stop-color="#5a5e87"/><stop offset="0.2" stop-color="#c2c5ea"/><stop offset="0.34" stop-color="#f2f3fd"/><stop offset="0.58" stop-color="#a1a5d3"/><stop offset="1" stop-color="#50547c"/></linearGradient><linearGradient id="g35" gradientUnits="userSpaceOnUse" x1="616.1" y1="341.3" x2="619.2" y2="340.0"><stop offset="0" stop-color="#5f638b"/><stop offset="0.3" stop-color="#b4b8e2"/><stop offset="0.6" stop-color="#8f93c0"/><stop offset="1" stop-color="#50547a"/></linearGradient><linearGradient id="g36" gradientUnits="userSpaceOnUse" x1="607.6" y1="325.4" x2="614.4" y2="322.6"><stop offset="0" stop-color="#5a5e87"/><stop offset="0.2" stop-color="#c2c5ea"/><stop offset="0.34" stop-color="#f2f3fd"/><stop offset="0.58" stop-color="#a1a5d3"/><stop offset="1" stop-color="#50547c"/></linearGradient><linearGradient id="g37" gradientUnits="userSpaceOnUse" x1="645.3" y1="331.0" x2="628.7" y2="333.0"><stop offset="0" stop-color="#5a5e87"/><stop offset="0.2" stop-color="#c2c5ea"/><stop offset="0.34" stop-color="#f2f3fd"/><stop offset="0.58" stop-color="#a1a5d3"/><stop offset="1" stop-color="#50547c"/></linearGradient><linearGradient id="g38" gradientUnits="userSpaceOnUse" x1="703.3" y1="384.7" x2="703.1" y2="388.3"><stop offset="0" stop-color="#5f638b"/><stop offset="0.3" stop-color="#b4b8e2"/><stop offset="0.6" stop-color="#8f93c0"/><stop offset="1" stop-color="#50547a"/></linearGradient><linearGradient id="g39" gradientUnits="userSpaceOnUse" x1="724.7" y1="383.9" x2="724.2" y2="391.5"><stop offset="0" stop-color="#5a5e87"/><stop offset="0.2" stop-color="#c2c5ea"/><stop offset="0.34" stop-color="#f2f3fd"/><stop offset="0.58" stop-color="#a1a5d3"/><stop offset="1" stop-color="#50547c"/></linearGradient><linearGradient id="g40" gradientUnits="userSpaceOnUse" x1="715.0" y1="422.0" x2="713.0" y2="440.0"><stop offset="0" stop-color="#d6d9f6"/><stop offset="1" stop-color="#666a93"/></linearGradient><linearGradient id="g41" gradientUnits="userSpaceOnUse" x1="679.0" y1="414.9" x2="682.2" y2="415.4"><stop offset="0" stop-color="#2b2d47"/><stop offset="0.3" stop-color="#7a7ea8"/><stop offset="0.6" stop-color="#3f4264"/><stop offset="1" stop-color="#191a2e"/></linearGradient><linearGradient id="g42" gradientUnits="userSpaceOnUse" x1="681.2" y1="439.6" x2="684.4" y2="438.9"><stop offset="0" stop-color="#2b2d47"/><stop offset="0.3" stop-color="#7a7ea8"/><stop offset="0.6" stop-color="#3f4264"/><stop offset="1" stop-color="#191a2e"/></linearGradient><linearGradient id="g43" gradientUnits="userSpaceOnUse" x1="695.3" y1="410.5" x2="699.7" y2="394.5"><stop offset="0" stop-color="#62668f"/><stop offset="0.2" stop-color="#b4b8e2"/><stop offset="0.45" stop-color="#9a9ec8"/><stop offset="1" stop-color="#55597f"/></linearGradient><linearGradient id="g44" gradientUnits="userSpaceOnUse" x1="743.8" y1="419.0" x2="748.3" y2="405.0"><stop offset="0" stop-color="#5a5e87"/><stop offset="0.2" stop-color="#c2c5ea"/><stop offset="0.34" stop-color="#f2f3fd"/><stop offset="0.58" stop-color="#a1a5d3"/><stop offset="1" stop-color="#50547c"/></linearGradient><linearGradient id="g45" gradientUnits="userSpaceOnUse" x1="555.0" y1="405.0" x2="566.0" y2="418.0"><stop offset="0" stop-color="#d6d9f6"/><stop offset="1" stop-color="#666a93"/></linearGradient><linearGradient id="g46" gradientUnits="userSpaceOnUse" x1="580.5" y1="408.4" x2="583.9" y2="407.2"><stop offset="0" stop-color="#2b2d47"/><stop offset="0.3" stop-color="#7a7ea8"/><stop offset="0.6" stop-color="#3f4264"/><stop offset="1" stop-color="#191a2e"/></linearGradient><linearGradient id="g47" gradientUnits="userSpaceOnUse" x1="605.6" y1="433.9" x2="603.2" y2="431.5"><stop offset="0" stop-color="#5f638b"/><stop offset="0.3" stop-color="#b4b8e2"/><stop offset="0.6" stop-color="#8f93c0"/><stop offset="1" stop-color="#50547a"/></linearGradient><linearGradient id="g48" gradientUnits="userSpaceOnUse" x1="594.7" y1="448.6" x2="588.9" y2="443.1"><stop offset="0" stop-color="#5a5e87"/><stop offset="0.2" stop-color="#c2c5ea"/><stop offset="0.34" stop-color="#f2f3fd"/><stop offset="0.58" stop-color="#a1a5d3"/><stop offset="1" stop-color="#50547c"/></linearGradient><linearGradient id="g49" gradientUnits="userSpaceOnUse" x1="596.4" y1="428.5" x2="586.1" y2="415.3"><stop offset="0" stop-color="#62668f"/><stop offset="0.2" stop-color="#d3d6f4"/><stop offset="0.4" stop-color="#fbfbff"/><stop offset="0.62" stop-color="#b4b8e2"/><stop offset="1" stop-color="#55597f"/></linearGradient><linearGradient id="g50" gradientUnits="userSpaceOnUse" x1="550.3" y1="456.4" x2="541.1" y2="443.9"><stop offset="0" stop-color="#5a5e87"/><stop offset="0.2" stop-color="#c2c5ea"/><stop offset="0.34" stop-color="#f2f3fd"/><stop offset="0.58" stop-color="#a1a5d3"/><stop offset="1" stop-color="#50547c"/></linearGradient></defs>
<polygon points="917.1,311.4 920.0,311.8 954.4,342.2 954.0,344.0 871.0,415.5 821.5,455.2 817.7,458.8 810.2,451.4 812.0,396.8" fill="url(#g1)" stroke="#101226" stroke-width="1.0" stroke-linejoin="round"/>
<path d="M917.1,311.4 L812.3,396.8" stroke="#e9ebfa" stroke-width="1.6" fill="none"/>
<path d="M917.3,310.9 L812.3,396.3" stroke="#101226" stroke-width="0.7" fill="none"/>
<path d="M916,313 L813,397.5" stroke="#15172b" stroke-width="1" stroke-dasharray="1,9"/>
<polygon points="385.4,434.7 516.3,458.7 559.2,466.0 549.8,487.4 541.4,512.0 524.6,508.0 453.4,497.5 366.5,481.2 368.0,475.0 383.0,436.5" fill="url(#g2)" stroke="#101226" stroke-width="1.0" stroke-linejoin="round"/>
<path d="M383.6,437.5 L368.4,478.5" stroke="#f2f3fc" stroke-width="1.3" fill="none"/>
<path d="M671.4,647 L712,636 L726.6,632.4 L764.1,778.4 Q738,781.5 707.6,794.1 Z" fill="url(#g3)" stroke="#101226" stroke-width="1.1" stroke-linejoin="round"/>
<path d="M671.6,646.9 L706.0,634.8" stroke="#101226" stroke-width="0.8" fill="none"/>
<polygon points="707.0,634.8 724.6,631.6 726.6,663.7 708.7,668.3" fill="#b4b8de" stroke="#101226" stroke-width="0.8" stroke-linejoin="round"/>
<polygon points="708.0,662.8 726.1,659.6 726.6,663.9 708.7,668.5" fill="#fbfbff" stroke="#101226" stroke-width="0.7" stroke-linejoin="round"/>
<ellipse cx="686.5" cy="548.0" rx="45.5" ry="31" transform="rotate(-28 686.5 548.0)" fill="#666a93" stroke="#101226" stroke-width="1.0"/>
<ellipse cx="686.5" cy="548.0" rx="42.5" ry="28" transform="rotate(-28 686.5 548.0)" fill="#878bb8" stroke="#101226" stroke-width="0.7"/>
<ellipse cx="686.5" cy="548" rx="40" ry="25.6" transform="rotate(-28 686.5 548)" fill="none" stroke="#272942" stroke-width="3" stroke-dasharray="1.3,1.5"/>
<ellipse cx="686.5" cy="548.0" rx="37.5" ry="23" transform="rotate(-28 686.5 548.0)" fill="#45486b" stroke="#101226" stroke-width="0.7"/>
<ellipse cx="686.5" cy="548.0" rx="34" ry="20" transform="rotate(-28 686.5 548.0)" fill="#878bb8" stroke="#101226" stroke-width="0.7"/>
<ellipse cx="686.5" cy="548" rx="31" ry="17.6" transform="rotate(-28 686.5 548)" fill="#272942" stroke="#d6d9f6" stroke-width="1.2" stroke-dasharray="2,2.4"/>
<rect x="668.1" y="537.1" width="6.3" height="6.1" transform="rotate(133 671.2 540.2)" fill="#45486b" stroke="#101226" stroke-width="0.6"/>
<rect x="698.7" y="547.1" width="6.8" height="5.1" transform="rotate(162 702.1 549.6)" fill="#9da1cd" stroke="#101226" stroke-width="0.6"/>
<rect x="668.1" y="555.2" width="4.8" height="3.2" transform="rotate(45 670.5 556.7)" fill="#d6d9f6" stroke="#101226" stroke-width="0.6"/>
<rect x="685.3" y="552.0" width="6.7" height="5.5" transform="rotate(29 688.6 554.7)" fill="#9da1cd" stroke="#101226" stroke-width="0.6"/>
<rect x="696.2" y="554.4" width="3.9" height="2.8" transform="rotate(157 698.1 555.8)" fill="#878bb8" stroke="#101226" stroke-width="0.6"/>
<rect x="687.4" y="533.7" width="4.1" height="3.4" transform="rotate(56 689.5 535.4)" fill="#878bb8" stroke="#101226" stroke-width="0.6"/>
<rect x="664.7" y="542.3" width="4.2" height="6.1" transform="rotate(124 666.8 545.4)" fill="#b7bbe4" stroke="#101226" stroke-width="0.6"/>
<rect x="679.6" y="553.8" width="4.1" height="3.3" transform="rotate(12 681.6 555.4)" fill="#666a93" stroke="#101226" stroke-width="0.6"/>
<rect x="690.8" y="536.3" width="5.6" height="5.3" transform="rotate(12 693.6 538.9)" fill="#666a93" stroke="#101226" stroke-width="0.6"/>
<rect x="690.6" y="537.6" width="4.6" height="4.5" transform="rotate(127 692.9 539.8)" fill="#9da1cd" stroke="#101226" stroke-width="0.6"/>
<rect x="681.7" y="558.6" width="6.8" height="4.1" transform="rotate(73 685.1 560.6)" fill="#45486b" stroke="#101226" stroke-width="0.6"/>
<rect x="686.6" y="538.9" width="5.5" height="2.8" transform="rotate(8 689.4 540.4)" fill="#878bb8" stroke="#101226" stroke-width="0.6"/>
<rect x="667.3" y="537.3" width="3.9" height="3.7" transform="rotate(148 669.3 539.1)" fill="#b7bbe4" stroke="#101226" stroke-width="0.6"/>
<rect x="675.3" y="551.7" width="5.3" height="5.5" transform="rotate(19 678.0 554.4)" fill="#d6d9f6" stroke="#101226" stroke-width="0.6"/>
<rect x="686.5" y="538.1" width="4.5" height="4.3" transform="rotate(176 688.8 540.3)" fill="#878bb8" stroke="#101226" stroke-width="0.6"/>
<rect x="672.5" y="554.6" width="6.7" height="4.0" transform="rotate(166 675.9 556.6)" fill="#45486b" stroke="#101226" stroke-width="0.6"/>
<polygon points="647.0,571.0 659.0,576.0 655.5,586.0 643.5,581.0" fill="#9da1cd" stroke="#101226" stroke-width="0.9" stroke-linejoin="round"/>
<path d="M649.0,577.0 L657.0,580.5" stroke="#101226" stroke-width="0.7" fill="none"/>
<polygon points="726.0,572.0 738.0,566.0 742.0,577.0 731.0,583.0" fill="#9da1cd" stroke="#101226" stroke-width="0.9" stroke-linejoin="round"/>
<polygon points="729.0,496.0 744.0,492.0 748.0,505.0 734.0,510.5" fill="#b7bbe4" stroke="#101226" stroke-width="0.9" stroke-linejoin="round"/>
<circle cx="739.5" cy="501.0" r="3.8" fill="#b7bbe4" stroke="#101226" stroke-width="0.6"/>
<circle cx="739.5" cy="501.0" r="2.4" fill="#272942" stroke="#101226" stroke-width="0.6"/>
<circle cx="740.1" cy="501.6" r="1.32" fill="#45486b" stroke="#101226" stroke-width="0"/>
<polygon points="640.0,510.0 652.0,506.0 656.0,520.0 644.0,524.0" fill="#878bb8" stroke="#101226" stroke-width="0.9" stroke-linejoin="round"/>
<polygon points="651.0,497.0 700.0,488.0 726.0,508.0 722.0,541.0 684.0,560.0 652.0,543.0" fill="#878bb8" stroke="#101226" stroke-width="0.9" stroke-linejoin="round"/>
<polygon points="656.0,498.0 676.0,494.5 672.0,522.0 655.0,528.0" fill="#45486b" stroke="#101226" stroke-width="0.7" stroke-linejoin="round"/>
<polygon points="664.0,497.0 692.0,492.0 697.0,531.0 670.0,538.0" fill="#272942" stroke="#101226" stroke-width="0.7" stroke-linejoin="round"/>
<polygon points="698.0,493.0 724.0,508.0 729.0,532.0 708.0,538.0 700.0,520.0" fill="#b7bbe4" stroke="#101226" stroke-width="0.8" stroke-linejoin="round"/>
<polygon points="704.0,500.0 716.0,507.0 712.0,520.0 702.0,516.0" fill="#45486b" stroke="#101226" stroke-width="0.6" stroke-linejoin="round"/>
<polygon points="676.0,510.0 687.0,508.5 689.5,535.0 679.0,537.0" fill="#0a0b15" stroke="#101226" stroke-width="0.5" stroke-linejoin="round"/>
<path d="M677.0,511.5 L688.0,510.0" stroke="#b4b8e2" stroke-width="0.8" fill="none"/>
<path d="M677.0,515.0 L688.0,513.5" stroke="#b4b8e2" stroke-width="0.8" fill="none"/>
<path d="M677.0,518.5 L688.0,517.0" stroke="#b4b8e2" stroke-width="0.8" fill="none"/>
<path d="M677.0,522.0 L688.0,520.5" stroke="#b4b8e2" stroke-width="0.8" fill="none"/>
<path d="M677.0,525.5 L688.0,524.0" stroke="#b4b8e2" stroke-width="0.8" fill="none"/>
<path d="M677.0,529.0 L688.0,527.5" stroke="#b4b8e2" stroke-width="0.8" fill="none"/>
<path d="M677.0,532.5 L688.0,531.0" stroke="#b4b8e2" stroke-width="0.8" fill="none"/>
<polygon points="690.0,505.0 698.0,503.0 702.0,528.0 694.0,531.0" fill="#9da1cd" stroke="#101226" stroke-width="0.6" stroke-linejoin="round"/>
<polygon points="706.0,523.0 722.0,517.0 728.0,531.0 712.0,539.0" fill="#9da1cd" stroke="#101226" stroke-width="0.7" stroke-linejoin="round"/>
<polygon points="709.0,527.0 720.0,523.0 722.0,529.0 712.0,533.0" fill="#272942" stroke="#101226" stroke-width="0.5" stroke-linejoin="round"/>
<polygon points="568.2,492.6 566.8,506.6 560.8,505.9 562.3,492.0" fill="#272942" stroke="#101226" stroke-width="0.6" stroke-linejoin="round"/>
<path d="M565.0,504.2 L556.0,503.2" stroke="#101226" stroke-width="2.4" stroke-linecap="round"/>
<path d="M565.0,504.2 L556.0,503.2" stroke="#b4b8e2" stroke-width="0.9" stroke-linecap="round"/>
<path d="M565.2,501.8 L556.3,500.8" stroke="#101226" stroke-width="2.4" stroke-linecap="round"/>
<path d="M565.2,501.8 L556.3,500.8" stroke="#b4b8e2" stroke-width="0.9" stroke-linecap="round"/>
<path d="M565.5,499.4 L556.5,498.5" stroke="#101226" stroke-width="2.4" stroke-linecap="round"/>
<path d="M565.5,499.4 L556.5,498.5" stroke="#b4b8e2" stroke-width="0.9" stroke-linecap="round"/>
<path d="M565.8,497.0 L556.8,496.1" stroke="#101226" stroke-width="2.4" stroke-linecap="round"/>
<path d="M565.8,497.0 L556.8,496.1" stroke="#b4b8e2" stroke-width="0.9" stroke-linecap="round"/>
<path d="M566.0,494.6 L557.1,493.7" stroke="#101226" stroke-width="2.4" stroke-linecap="round"/>
<path d="M566.0,494.6 L557.1,493.7" stroke="#b4b8e2" stroke-width="0.9" stroke-linecap="round"/>
<polygon points="647.6,505.4 592.7,500.3 591.4,514.2 646.3,519.3" fill="url(#g4)" stroke="#101226" stroke-width="0.9" stroke-linejoin="round"/>
<path d="M635.5,504.3 L634.2,518.2" stroke="#101226" stroke-width="0.7" fill="none"/>
<path d="M604.7,501.4 L603.5,515.4" stroke="#101226" stroke-width="0.7" fill="none"/>
<polygon points="629.0,510.0 649.0,512.0 650.0,521.0 640.0,524.0 628.0,519.0" fill="#878bb8" stroke="#101226" stroke-width="0.8" stroke-linejoin="round"/>
<circle cx="634.0" cy="516.0" r="2.2" fill="#878bb8" stroke="#101226" stroke-width="0.7"/>
<circle cx="634.0" cy="516.0" r="1.1" fill="#45486b" stroke="#101226" stroke-width="0.4"/>
<circle cx="644.0" cy="517.0" r="2.2" fill="#878bb8" stroke="#101226" stroke-width="0.7"/>
<circle cx="644.0" cy="517.0" r="1.1" fill="#45486b" stroke="#101226" stroke-width="0.4"/>
<polygon points="588.7,494.2 563.3,491.6 561.8,506.0 587.2,508.6" fill="url(#g5)" stroke="#101226" stroke-width="0.9" stroke-linejoin="round"/>
<path d="M576.6,493.0 L575.1,507.4" stroke="#101226" stroke-width="0.7" fill="none"/>
<path d="M571.4,492.4 L569.9,506.8" stroke="#101226" stroke-width="0.7" fill="none"/>
<polygon points="588.6,494.5 593.6,478.2 597.5,476.6 601.5,478.2 602.8,489.8 599.5,496.5" fill="#b7bbe4" stroke="#101226" stroke-width="0.9" stroke-linejoin="round"/>
<circle cx="597.8" cy="479.6" r="2.4" fill="#878bb8" stroke="#101226" stroke-width="0.7"/>
<circle cx="597.8" cy="479.6" r="1.2" fill="#45486b" stroke="#101226" stroke-width="0.4"/>
<polygon points="623.5,494.4 639.7,501.4 641.1,498.2 624.8,491.3" fill="url(#g6)" stroke="#101226" stroke-width="0.6" stroke-linejoin="round"/>
<polygon points="601.8,488.0 622.5,496.8 625.9,488.9 605.2,480.0" fill="url(#g7)" stroke="#101226" stroke-width="0.8" stroke-linejoin="round"/>
<circle cx="644.0" cy="497.0" r="4" fill="#666a93" stroke="#101226" stroke-width="0.8"/>
<circle cx="644.0" cy="497.0" r="2" fill="#878bb8" stroke="#101226" stroke-width="0.7"/>
<circle cx="644.0" cy="497.0" r="1.0" fill="#45486b" stroke="#101226" stroke-width="0.4"/>
<polygon points="581.2,497.7 595.6,494.8 601.5,501.7 599.8,513.5 587.0,515.0 582.7,509.6" fill="#b7bbe4" stroke="#101226" stroke-width="0.9" stroke-linejoin="round"/>
<polygon points="582.7,509.6 587.0,515.0 599.8,513.5 598.5,519.3 586.6,518.2 582.4,513.5" fill="#666a93" stroke="#101226" stroke-width="0.7" stroke-linejoin="round"/>
<circle cx="588.6" cy="501.4" r="4.4" fill="#b7bbe4" stroke="#101226" stroke-width="0.6"/>
<circle cx="588.6" cy="501.4" r="3" fill="#272942" stroke="#101226" stroke-width="0.6"/>
<circle cx="589.2" cy="502.0" r="1.6500000000000001" fill="#45486b" stroke="#101226" stroke-width="0"/>
<polygon points="559.8,507.7 573.7,509.6 579.7,517.6 572.7,519.0 556.9,513.6" fill="#9da1cd" stroke="#101226" stroke-width="0.9" stroke-linejoin="round"/>
<polygon points="556.9,513.6 572.7,518.6 616.4,534.4 618.6,541.6 572.7,529.7 557.9,523.5" fill="url(#g8)" stroke="#101226" stroke-width="0.9" stroke-linejoin="round"/>
<path d="M572.7,518.6 L572.7,529.7" stroke="#101226" stroke-width="0.7" fill="none"/>
<path d="M574.0,524.0 L612.0,536.5" stroke="#101226" stroke-width="0.7" fill="none"/>
<polygon points="619.2,539.9 613.2,518.1 610.0,519.1 616.0,540.9" fill="url(#g9)" stroke="#101226" stroke-width="0.6" stroke-linejoin="round"/>
<circle cx="618.0" cy="541.0" r="2.8" fill="#878bb8" stroke="#101226" stroke-width="0.7"/>
<circle cx="618.0" cy="541.0" r="1.4" fill="#45486b" stroke="#101226" stroke-width="0.4"/>
<polygon points="606.0,511.0 618.0,512.5 619.0,521.0 607.0,520.0" fill="#878bb8" stroke="#101226" stroke-width="0.8" stroke-linejoin="round"/>
<polygon points="749.5,439.5 754.0,447.5 716.0,468.5 711.5,461.0" fill="url(#g10)" stroke="#101226" stroke-width="0.9" stroke-linejoin="round"/>
<path d="M748.0,445.5 L716.0,463.5" stroke="#101226" stroke-width="0.7" fill="none"/>
<polygon points="700.7,508.7 755.3,471.3 745.9,457.7 691.4,495.1" fill="url(#g11)" stroke="#101226" stroke-width="0.9" stroke-linejoin="round"/>
<path d="M712.5,500.6 L703.2,487.0" stroke="#101226" stroke-width="0.7" fill="none"/>
<path d="M715.1,498.8 L705.8,485.2" stroke="#101226" stroke-width="0.7" fill="none"/>
<polygon points="706.0,486.0 716.0,493.0 710.0,502.0 697.0,500.0" fill="#d6d9f6" stroke="#101226" stroke-width="0.8" stroke-linejoin="round"/>
<polygon points="758.6,461.6 781.3,445.0 772.4,432.9 749.7,449.5" fill="url(#g12)" stroke="#101226" stroke-width="0.9" stroke-linejoin="round"/>
<path d="M769.9,453.3 L761.1,441.2" stroke="#101226" stroke-width="0.7" fill="none"/>
<polygon points="741.0,456.0 752.0,447.0 764.0,451.0 766.0,463.0 757.0,471.0 744.0,468.5" fill="#b7bbe4" stroke="#101226" stroke-width="0.9" stroke-linejoin="round"/>
<polygon points="744.0,468.5 757.0,471.0 756.0,477.0 745.0,474.5" fill="#666a93" stroke="#101226" stroke-width="0.7" stroke-linejoin="round"/>
<circle cx="753.5" cy="458.0" r="4.4" fill="#b7bbe4" stroke="#101226" stroke-width="0.6"/>
<circle cx="753.5" cy="458.0" r="3" fill="#272942" stroke="#101226" stroke-width="0.6"/>
<circle cx="754.1" cy="458.6" r="1.6500000000000001" fill="#45486b" stroke="#101226" stroke-width="0"/>
<polygon points="755.5,468.7 765.4,464.7 775.8,474.6 776.6,482.8 769.4,484.0" fill="#b7bbe4" stroke="#101226" stroke-width="0.9" stroke-linejoin="round"/>
<circle cx="772.3" cy="475.6" r="2.6" fill="#878bb8" stroke="#101226" stroke-width="0.7"/>
<circle cx="772.3" cy="475.6" r="1.3" fill="#45486b" stroke="#101226" stroke-width="0.4"/>
<polygon points="746.8,491.1 730.9,500.0 732.5,502.8 748.3,493.9" fill="url(#g13)" stroke="#101226" stroke-width="0.6" stroke-linejoin="round"/>
<polygon points="766.7,477.3 745.6,489.0 749.5,496.0 770.5,484.3" fill="url(#g14)" stroke="#101226" stroke-width="0.8" stroke-linejoin="round"/>
<polygon points="699.6,621.7 716.7,617.4 718.1,623.3 701.0,627.5" fill="#272942" stroke="#101226" stroke-width="0.6" stroke-linejoin="round"/>
<path d="M714.9,619.9 L717.6,630.6" stroke="#101226" stroke-width="2.4" stroke-linecap="round"/>
<path d="M714.9,619.9 L717.6,630.6" stroke="#b4b8e2" stroke-width="0.9" stroke-linecap="round"/>
<path d="M712.4,620.6 L715.0,631.2" stroke="#101226" stroke-width="2.4" stroke-linecap="round"/>
<path d="M712.4,620.6 L715.0,631.2" stroke="#b4b8e2" stroke-width="0.9" stroke-linecap="round"/>
<path d="M709.9,621.2 L712.5,631.9" stroke="#101226" stroke-width="2.4" stroke-linecap="round"/>
<path d="M709.9,621.2 L712.5,631.9" stroke="#b4b8e2" stroke-width="0.9" stroke-linecap="round"/>
<path d="M707.3,621.8 L710.0,632.5" stroke="#101226" stroke-width="2.4" stroke-linecap="round"/>
<path d="M707.3,621.8 L710.0,632.5" stroke="#b4b8e2" stroke-width="0.9" stroke-linecap="round"/>
<path d="M704.8,622.4 L707.5,633.1" stroke="#101226" stroke-width="2.4" stroke-linecap="round"/>
<path d="M704.8,622.4 L707.5,633.1" stroke="#b4b8e2" stroke-width="0.9" stroke-linecap="round"/>
<path d="M702.3,623.1 L705.0,633.7" stroke="#101226" stroke-width="2.4" stroke-linecap="round"/>
<path d="M702.3,623.1 L705.0,633.7" stroke="#b4b8e2" stroke-width="0.9" stroke-linecap="round"/>
<polygon points="720.6,561.5 726.1,560.4 731.6,596.8 720.6,599.0 719.5,582.5" fill="url(#g15)" stroke="#101226" stroke-width="0.9" stroke-linejoin="round"/>
<polygon points="720.6,597.9 731.6,595.7 732.3,616.7 721.7,621.3 712.8,615.6 713.9,604.5" fill="#9da1cd" stroke="#101226" stroke-width="0.9" stroke-linejoin="round"/>
<path d="M720.6,597.9 L721.7,621.3" stroke="#101226" stroke-width="0.7" fill="none"/>
<path d="M713.9,604.5 L720.8,608.0" stroke="#101226" stroke-width="0.7" fill="none"/>
<polygon points="670.3,565.2 674.3,582.4 677.7,581.6 673.7,564.4" fill="url(#g16)" stroke="#101226" stroke-width="0.6" stroke-linejoin="round"/>
<polygon points="670.2,581.3 669.8,600.9 679.4,601.1 679.8,581.5" fill="url(#g17)" stroke="#101226" stroke-width="0.9" stroke-linejoin="round"/>
<polygon points="669.8,600.1 690.8,595.2 691.9,606.7 672.0,613.4" fill="#b7bbe4" stroke="#101226" stroke-width="0.9" stroke-linejoin="round"/>
<path d="M670.6,606.0 L691.4,600.6" stroke="#101226" stroke-width="0.7" fill="none"/>
<circle cx="672.2" cy="604.2" r="2.6" fill="#878bb8" stroke="#101226" stroke-width="0.7"/>
<circle cx="672.2" cy="604.2" r="1.3" fill="#45486b" stroke="#101226" stroke-width="0.4"/>
<polygon points="680.3,543.9 692.9,595.6 708.1,591.9 695.5,540.2" fill="url(#g18)" stroke="#101226" stroke-width="0.9" stroke-linejoin="round"/>
<path d="M682.2,551.8 L697.4,548.1" stroke="#101226" stroke-width="0.7" fill="none"/>
<path d="M683.0,555.0 L698.2,551.4" stroke="#101226" stroke-width="0.7" fill="none"/>
<path d="M689.8,582.9 L705.0,579.2" stroke="#101226" stroke-width="0.7" fill="none"/>
<polygon points="674.0,538.0 684.0,526.0 698.0,535.0 695.0,551.0 678.0,555.0" fill="#b7bbe4" stroke="#101226" stroke-width="0.9" stroke-linejoin="round"/>
<polyline points="678.0,555.0 686.0,544.0 695.0,551.0" stroke="#101226" stroke-width="0.7" fill="none"/>
<polygon points="692.4,598.8 699.6,623.1 714.9,618.6 707.8,594.3" fill="url(#g19)" stroke="#101226" stroke-width="0.9" stroke-linejoin="round"/>
<path d="M695.5,609.3 L710.9,604.8" stroke="#101226" stroke-width="0.7" fill="none"/>
<path d="M697.0,614.3 L712.3,609.8" stroke="#101226" stroke-width="0.7" fill="none"/>
<polygon points="689.7,589.1 704.0,584.7 708.4,597.9 706.0,603.0 694.1,604.5 690.6,598.0" fill="#b7bbe4" stroke="#101226" stroke-width="0.9" stroke-linejoin="round"/>
<circle cx="699.6" cy="594.4" r="4.4" fill="#b7bbe4" stroke="#101226" stroke-width="0.6"/>
<circle cx="699.6" cy="594.4" r="3" fill="#272942" stroke="#101226" stroke-width="0.6"/>
<circle cx="700.2" cy="595.0" r="1.6500000000000001" fill="#45486b" stroke="#101226" stroke-width="0"/>
<polygon points="633.2,522.5 644.3,562.1 648.1,561.1 637.0,521.5" fill="url(#g20)" stroke="#101226" stroke-width="0.6" stroke-linejoin="round"/>
<polygon points="654.6,517.4 668.9,568.6 671.9,567.8 657.6,516.6" fill="url(#g21)" stroke="#101226" stroke-width="0.6" stroke-linejoin="round"/>
<circle cx="646.5" cy="563.0" r="2.8" fill="#878bb8" stroke="#101226" stroke-width="0.7"/>
<circle cx="646.5" cy="563.0" r="1.4" fill="#45486b" stroke="#101226" stroke-width="0.4"/>
<polygon points="668.0,567.0 676.0,566.0 677.0,574.0 669.0,575.0" fill="#9da1cd" stroke="#101226" stroke-width="0.7" stroke-linejoin="round"/>
<polygon points="626.5,468.5 633.0,474.5 652.0,474.0 654.0,466.0 640.0,464.5" fill="#b7bbe4" stroke="#101226" stroke-width="0.9" stroke-linejoin="round"/>
<polygon points="624.5,467.5 630.0,465.5 632.5,474.0 627.0,476.5" fill="#45486b" stroke="#101226" stroke-width="0.7" stroke-linejoin="round"/>
<polygon points="690.0,466.0 708.0,458.5 716.5,459.5 719.5,466.5 694.0,481.0" fill="#b7bbe4" stroke="#101226" stroke-width="0.9" stroke-linejoin="round"/>
<path d="M692.0,473.0 L716.0,463.0" stroke="#101226" stroke-width="0.7" fill="none"/>
<polygon points="630.5,449.5 640.0,443.5 655.0,461.0 646.0,468.0" fill="#9da1cd" stroke="#101226" stroke-width="0.9" stroke-linejoin="round"/>
<polygon points="629.5,449.0 634.5,441.5 643.0,445.0 638.5,453.0" fill="#d6d9f6" stroke="#101226" stroke-width="0.8" stroke-linejoin="round"/>
<path d="M632.0,445.0 L640.5,449.0" stroke="#101226" stroke-width="0.7" fill="none"/>
<ellipse cx="667.2" cy="474.2" rx="23" ry="16.5" transform="rotate(-22 667.2 474.2)" fill="#666a93" stroke="#101226" stroke-width="1.0"/>
<ellipse cx="667.2" cy="474.2" rx="20.5" ry="14" transform="rotate(-22 667.2 474.2)" fill="#b7bbe4" stroke="#101226" stroke-width="0.7"/>
<ellipse cx="667.2" cy="474.2" rx="17" ry="11.5" transform="rotate(-22 667.2 474.2)" fill="#45486b" stroke="#101226" stroke-width="0.7"/>
<ellipse cx="666.8" cy="473.0" rx="13.5" ry="8.8" transform="rotate(-22 666.8 473.0)" fill="#d6d9f6" stroke="#101226" stroke-width="0.7"/>
<ellipse cx="666.4" cy="472.0" rx="9.6" ry="6.2" transform="rotate(-22 666.4 472.0)" fill="#878bb8" stroke="#101226" stroke-width="0.6"/>
<ellipse cx="666.0" cy="471.0" rx="7.6" ry="4.8" transform="rotate(-22 666.0 471.0)" fill="#272942" stroke="#101226" stroke-width="0.6"/>
<polygon points="646.0,484.0 656.0,490.0 676.0,490.5 690.0,483.0 692.0,494.0 674.0,505.0 654.0,500.0" fill="#666a93" stroke="#101226" stroke-width="0.9" stroke-linejoin="round"/>
<polygon points="644.9,430.2 658.9,475.2 672.7,470.8 658.7,425.8" fill="url(#g22)" stroke="#101226" stroke-width="0.9" stroke-linejoin="round"/>
<polygon points="631.0,419.0 640.0,414.0 668.0,421.0 672.0,430.0 664.0,436.0 646.0,432.0 634.0,428.0" fill="#666a93" stroke="#101226" stroke-width="0.9" stroke-linejoin="round"/>
<polygon points="638.0,408.0 660.0,402.5 668.0,415.0 664.0,426.0 646.0,428.0 640.0,420.0" fill="#272942" stroke="#101226" stroke-width="0.9" stroke-linejoin="round"/>
<ellipse cx="648.0" cy="411.5" rx="9" ry="5.4" transform="rotate(-10 648.0 411.5)" fill="#0a0b15" stroke="#101226" stroke-width="0.6"/>
<polygon points="652.0,418.0 668.0,422.0 666.0,431.0 652.0,428.0" fill="#878bb8" stroke="#101226" stroke-width="0.7" stroke-linejoin="round"/>
<circle cx="636.0" cy="424.0" r="2.6" fill="#878bb8" stroke="#101226" stroke-width="0.7"/>
<circle cx="636.0" cy="424.0" r="1.3" fill="#45486b" stroke="#101226" stroke-width="0.4"/>
<polygon points="659.8,432.4 677.8,448.4 682.2,443.6 664.2,427.6" fill="url(#g23)" stroke="#101226" stroke-width="0.8" stroke-linejoin="round"/>
<circle cx="682.0" cy="448.0" r="3.4" fill="#878bb8" stroke="#101226" stroke-width="0.7"/>
<circle cx="682.0" cy="448.0" r="1.7" fill="#45486b" stroke="#101226" stroke-width="0.4"/>
<polygon points="611.2,427.2 627.1,473.5 631.1,472.1 615.2,425.8" fill="url(#g24)" stroke="#101226" stroke-width="0.6" stroke-linejoin="round"/>
<polygon points="714.4,466.8 731.6,530.6 735.8,529.4 718.6,465.6" fill="url(#g25)" stroke="#101226" stroke-width="0.6" stroke-linejoin="round"/>
<polygon points="676.7,425.6 685.9,453.4 688.7,452.4 679.5,424.6" fill="url(#g26)" stroke="#101226" stroke-width="0.6" stroke-linejoin="round"/>
<polygon points="680.6,407.0 691.2,444.1 694.0,443.3 683.4,406.2" fill="url(#g27)" stroke="#101226" stroke-width="0.6" stroke-linejoin="round"/>
<polygon points="666.5,446.3 680.5,520.3 683.5,519.7 669.5,445.7" fill="url(#g28)" stroke="#101226" stroke-width="0.6" stroke-linejoin="round"/>
<circle cx="716.0" cy="464.0" r="3.2" fill="#878bb8" stroke="#101226" stroke-width="0.7"/>
<circle cx="716.0" cy="464.0" r="1.6" fill="#45486b" stroke="#101226" stroke-width="0.4"/>
<circle cx="734.2" cy="529.5" r="3" fill="#878bb8" stroke="#101226" stroke-width="0.7"/>
<circle cx="734.2" cy="529.5" r="1.5" fill="#45486b" stroke="#101226" stroke-width="0.4"/>
<polygon points="684.0,446.0 700.0,441.0 706.0,452.0 690.0,458.0" fill="#666a93" stroke="#101226" stroke-width="0.7" stroke-linejoin="round"/>
<circle cx="690.0" cy="450.0" r="2.2" fill="#878bb8" stroke="#101226" stroke-width="0.7"/>
<circle cx="690.0" cy="450.0" r="1.1" fill="#45486b" stroke="#101226" stroke-width="0.4"/>
<circle cx="698.0" cy="447.0" r="2.2" fill="#878bb8" stroke="#101226" stroke-width="0.7"/>
<circle cx="698.0" cy="447.0" r="1.1" fill="#45486b" stroke="#101226" stroke-width="0.4"/>
<path d="M573.1,126.4 Q600,117.5 625.5,115.4 Q628.5,115.2 629,118 L646.9,266.4 Q616,269 589.6,277.4 Z" fill="url(#g29)" stroke="#101226" stroke-width="1.1" stroke-linejoin="round"/>
<polygon points="616.5,240.0 634.8,237.1 638.1,265.3 619.5,268.4" fill="#b7bbe2" stroke="#101226" stroke-width="0.8" stroke-linejoin="round"/>
<path d="M789.7,392.6 L956,440 Q950,452 932.9,486.1 L794.6,447.2 L764.5,432.5 L776,411 Z" fill="url(#g30)" stroke="#101226" stroke-width="1.1" stroke-linejoin="round"/>
<path d="M955.0,441.5 L934.5,484.0" stroke="#101226" stroke-width="0.7" fill="none"/>
<path d="M951,446 Q944,462 933.5,485" fill="none" stroke="#15172b" stroke-width="0.6"/>
<polygon points="779.6,415.7 806.0,422.2 799.5,437.5 772.8,429.5" fill="#b7bbe2" stroke="#101226" stroke-width="0.8" stroke-linejoin="round"/>
<path d="M365.5,558.2 L516.3,457.7 L539.3,469.2 L547.7,489.1 L545.6,492.3 L399,595.5 Z" fill="url(#g31)" stroke="#101226" stroke-width="1.1" stroke-linejoin="round"/>
<path d="M366.5,559.5 L399.5,594.5" stroke="#101226" stroke-width="0.6" fill="none"/>
<path d="M368,558 Q380,575 400,593.5" fill="none" stroke="#15172b" stroke-width="0.6"/>
<polygon points="491.1,476.1 515.2,459.8 524.6,471.3 501.6,488.1" fill="#b7bbe2" stroke="#101226" stroke-width="0.8" stroke-linejoin="round"/>
<path d="M516.3,457.7 L545.6,492.3" stroke="#101226" stroke-width="0.8" fill="none"/>
<polygon points="638.5,278.4 620.4,280.6 619.7,274.6 637.7,272.4" fill="#272942" stroke="#101226" stroke-width="0.6" stroke-linejoin="round"/>
<path d="M622.5,278.3 L621.2,267.4" stroke="#101226" stroke-width="2.4" stroke-linecap="round"/>
<path d="M622.5,278.3 L621.2,267.4" stroke="#b4b8e2" stroke-width="0.9" stroke-linecap="round"/>
<path d="M625.2,278.0 L623.8,267.1" stroke="#101226" stroke-width="2.4" stroke-linecap="round"/>
<path d="M625.2,278.0 L623.8,267.1" stroke="#b4b8e2" stroke-width="0.9" stroke-linecap="round"/>
<path d="M627.9,277.7 L626.5,266.7" stroke="#101226" stroke-width="2.4" stroke-linecap="round"/>
<path d="M627.9,277.7 L626.5,266.7" stroke="#b4b8e2" stroke-width="0.9" stroke-linecap="round"/>
<path d="M630.5,277.3 L629.2,266.4" stroke="#101226" stroke-width="2.4" stroke-linecap="round"/>
<path d="M630.5,277.3 L629.2,266.4" stroke="#b4b8e2" stroke-width="0.9" stroke-linecap="round"/>
<path d="M633.2,277.0 L631.9,266.1" stroke="#101226" stroke-width="2.4" stroke-linecap="round"/>
<path d="M633.2,277.0 L631.9,266.1" stroke="#b4b8e2" stroke-width="0.9" stroke-linecap="round"/>
<path d="M635.9,276.7 L634.6,265.8" stroke="#101226" stroke-width="2.4" stroke-linecap="round"/>
<path d="M635.9,276.7 L634.6,265.8" stroke="#b4b8e2" stroke-width="0.9" stroke-linecap="round"/>
<polygon points="649.4,294.6 657.9,292.1 670.2,330.0 665.6,332.0 658.0,314.0" fill="url(#g32)" stroke="#101226" stroke-width="0.9" stroke-linejoin="round"/>
<polygon points="640.3,278.2 653.7,276.6 658.2,292.1 649.4,295.0 640.3,291.5" fill="#b7bbe4" stroke="#101226" stroke-width="0.9" stroke-linejoin="round"/>
<path d="M646.0,277.8 L648.0,293.5" stroke="#101226" stroke-width="0.7" fill="none"/>
<path d="M649.4,277.4 L651.5,293.8" stroke="#101226" stroke-width="0.7" fill="none"/>
<circle cx="668.2" cy="334.6" r="3.4" fill="#878bb8" stroke="#101226" stroke-width="0.7"/>
<circle cx="668.2" cy="334.6" r="1.7" fill="#45486b" stroke="#101226" stroke-width="0.4"/>
<polygon points="666.8,338.2 674.7,364.9 678.7,363.7 670.8,337.0" fill="url(#g33)" stroke="#101226" stroke-width="0.6" stroke-linejoin="round"/>
<circle cx="676.7" cy="367.6" r="5.6" fill="#272942" stroke="#101226" stroke-width="0.8"/>
<circle cx="675.7" cy="366.6" r="3.08" fill="#666a93" stroke="#101226" stroke-width="0.4"/>
<polygon points="638.6,273.5 642.9,299.4 623.6,302.5 619.4,276.6" fill="url(#g34)" stroke="#101226" stroke-width="0.9" stroke-linejoin="round"/>
<path d="M621.1,287.2 L640.4,284.0" stroke="#101226" stroke-width="0.7" fill="none"/>
<path d="M621.8,291.4 L641.0,288.2" stroke="#101226" stroke-width="0.7" fill="none"/>
<polygon points="622.5,294.0 641.0,290.5 646.5,296.0 643.0,301.0 624.5,304.0" fill="#666a93" stroke="#101226" stroke-width="0.8" stroke-linejoin="round"/>
<polygon points="602.1,305.6 622.7,300.8 624.0,313.6 604.6,315.2 601.0,311.0" fill="#b7bbe4" stroke="#101226" stroke-width="0.9" stroke-linejoin="round"/>
<circle cx="604.8" cy="308.0" r="2.4" fill="#878bb8" stroke="#101226" stroke-width="0.7"/>
<circle cx="604.8" cy="308.0" r="1.2" fill="#45486b" stroke="#101226" stroke-width="0.4"/>
<path d="M606.0,313.0 L623.0,311.0" stroke="#101226" stroke-width="0.7" fill="none"/>
<polygon points="613.4,334.6 618.7,347.9 621.9,346.7 616.6,333.3" fill="url(#g35)" stroke="#101226" stroke-width="0.6" stroke-linejoin="round"/>
<polygon points="603.6,315.4 611.5,335.4 618.4,332.6 610.4,312.6" fill="url(#g36)" stroke="#101226" stroke-width="0.8" stroke-linejoin="round"/>
<polygon points="617.0,345.0 625.0,343.0 628.0,352.0 620.0,354.5" fill="#9da1cd" stroke="#101226" stroke-width="0.8" stroke-linejoin="round"/>
<polygon points="642.2,305.0 648.5,357.0 631.8,359.0 625.5,307.0" fill="url(#g37)" stroke="#101226" stroke-width="0.9" stroke-linejoin="round"/>
<path d="M626.5,315.4 L643.2,313.4" stroke="#101226" stroke-width="0.7" fill="none"/>
<path d="M630.1,345.0 L646.8,343.0" stroke="#101226" stroke-width="0.7" fill="none"/>
<polygon points="624.0,299.0 634.0,293.5 641.0,298.5 641.5,311.0 634.0,316.0 626.0,313.5" fill="#b7bbe4" stroke="#101226" stroke-width="0.9" stroke-linejoin="round"/>
<circle cx="631.8" cy="302.2" r="4.6" fill="#b7bbe4" stroke="#101226" stroke-width="0.6"/>
<circle cx="631.8" cy="302.2" r="3.2" fill="#272942" stroke="#101226" stroke-width="0.6"/>
<circle cx="632.4" cy="302.8" r="1.7600000000000002" fill="#45486b" stroke="#101226" stroke-width="0"/>
<polyline points="626.0,313.5 633.5,310.5 641.5,311.0" stroke="#101226" stroke-width="0.7" fill="none"/>
<polygon points="756.5,420.7 761.7,404.5 767.4,406.4 762.2,422.5" fill="#272942" stroke="#101226" stroke-width="0.6" stroke-linejoin="round"/>
<path d="M762.9,407.3 L773.4,410.7" stroke="#101226" stroke-width="2.4" stroke-linecap="round"/>
<path d="M762.9,407.3 L773.4,410.7" stroke="#b4b8e2" stroke-width="0.9" stroke-linecap="round"/>
<path d="M762.2,409.6 L772.6,413.0" stroke="#101226" stroke-width="2.4" stroke-linecap="round"/>
<path d="M762.2,409.6 L772.6,413.0" stroke="#b4b8e2" stroke-width="0.9" stroke-linecap="round"/>
<path d="M761.4,412.0 L771.8,415.4" stroke="#101226" stroke-width="2.4" stroke-linecap="round"/>
<path d="M761.4,412.0 L771.8,415.4" stroke="#b4b8e2" stroke-width="0.9" stroke-linecap="round"/>
<path d="M760.6,414.4 L771.1,417.8" stroke="#101226" stroke-width="2.4" stroke-linecap="round"/>
<path d="M760.6,414.4 L771.1,417.8" stroke="#b4b8e2" stroke-width="0.9" stroke-linecap="round"/>
<path d="M759.8,416.8 L770.3,420.2" stroke="#101226" stroke-width="2.4" stroke-linecap="round"/>
<path d="M759.8,416.8 L770.3,420.2" stroke="#b4b8e2" stroke-width="0.9" stroke-linecap="round"/>
<path d="M759.1,419.1 L769.5,422.5" stroke="#101226" stroke-width="2.4" stroke-linecap="round"/>
<path d="M759.1,419.1 L769.5,422.5" stroke="#b4b8e2" stroke-width="0.9" stroke-linecap="round"/>
<polygon points="730.6,398.0 736.8,383.7 740.5,381.5 744.2,383.7 746.4,393.0 739.8,406.5" fill="#b7bbe4" stroke="#101226" stroke-width="0.9" stroke-linejoin="round"/>
<circle cx="740.5" cy="385.5" r="2.6" fill="#878bb8" stroke="#101226" stroke-width="0.7"/>
<circle cx="740.5" cy="385.5" r="1.3" fill="#45486b" stroke="#101226" stroke-width="0.4"/>
<path d="M738.5,386.0 L733.5,398.5" stroke="#101226" stroke-width="0.7" fill="none"/>
<polygon points="742.5,388.0 746.0,393.0 741.0,404.5 739.0,400.0" fill="#666a93" stroke="#101226" stroke-width="0.6" stroke-linejoin="round"/>
<polygon points="713.5,385.3 693.1,384.1 692.9,387.7 713.3,388.8" fill="url(#g38)" stroke="#101226" stroke-width="0.6" stroke-linejoin="round"/>
<polygon points="735.7,384.5 713.6,383.3 713.2,390.8 735.3,392.1" fill="url(#g39)" stroke="#101226" stroke-width="0.8" stroke-linejoin="round"/>
<polygon points="682.0,422.3 727.3,425.0 748.2,426.2 746.5,440.5 726.2,437.6 682.0,428.4" fill="url(#g40)" stroke="#101226" stroke-width="0.9" stroke-linejoin="round"/>
<polyline points="727.3,425.0 726.2,437.6" stroke="#101226" stroke-width="0.7" fill="none"/>
<path d="M698.0,430.5 L726.2,433.5" stroke="#101226" stroke-width="0.7" fill="none"/>
<path d="M727.0,430.0 L747.0,432.5" stroke="#101226" stroke-width="0.7" fill="none"/>
<circle cx="679.6" cy="425.4" r="3.2" fill="#878bb8" stroke="#101226" stroke-width="0.7"/>
<circle cx="679.6" cy="425.4" r="1.6" fill="#45486b" stroke="#101226" stroke-width="0.4"/>
<polygon points="680.4,406.1 677.6,423.8 680.8,424.2 683.6,406.5" fill="url(#g41)" stroke="#101226" stroke-width="0.6" stroke-linejoin="round"/>
<polygon points="678.6,427.3 683.8,451.8 687.0,451.2 681.8,426.7" fill="url(#g42)" stroke="#101226" stroke-width="0.6" stroke-linejoin="round"/>
<polygon points="668.0,403.0 722.6,418.0 727.0,402.0 672.4,387.0" fill="url(#g43)" stroke="#101226" stroke-width="0.9" stroke-linejoin="round"/>
<path d="M682.4,407.0 L686.8,391.0" stroke="#101226" stroke-width="0.7" fill="none"/>
<path d="M686.7,408.1 L691.1,392.1" stroke="#101226" stroke-width="0.7" fill="none"/>
<polygon points="683.6,390.6 687.8,391.7 684.6,407.6 680.4,406.5" fill="#eceefc" stroke="#101226" stroke-width="0.6"/>
<polygon points="728.1,413.9 759.6,424.0 764.0,410.1 732.5,400.0" fill="url(#g44)" stroke="#101226" stroke-width="0.9" stroke-linejoin="round"/>
<path d="M741.5,418.2 L745.9,404.3" stroke="#101226" stroke-width="0.7" fill="none"/>
<path d="M749.2,420.7 L753.6,406.7" stroke="#101226" stroke-width="0.7" fill="none"/>
<polygon points="721.7,398.0 736.0,402.4 735.0,413.5 730.6,421.4 718.4,419.5 716.6,407.4" fill="#b7bbe4" stroke="#101226" stroke-width="0.9" stroke-linejoin="round"/>
<polygon points="718.4,419.5 730.6,421.4 733.0,414.0 735.0,413.5 734.0,419.5 729.5,425.5 719.0,423.5" fill="#45486b" stroke="#101226" stroke-width="0.7" stroke-linejoin="round"/>
<circle cx="727.8" cy="406.5" r="4.6" fill="#b7bbe4" stroke="#101226" stroke-width="0.6"/>
<circle cx="727.8" cy="406.5" r="3.2" fill="#272942" stroke="#101226" stroke-width="0.6"/>
<circle cx="728.4" cy="407.1" r="1.7600000000000002" fill="#45486b" stroke="#101226" stroke-width="0"/>
<polygon points="526.4,449.3 535.9,463.4 530.9,466.8 521.4,452.7" fill="#272942" stroke="#101226" stroke-width="0.6" stroke-linejoin="round"/>
<path d="M533.0,462.7 L523.9,468.8" stroke="#101226" stroke-width="2.4" stroke-linecap="round"/>
<path d="M533.0,462.7 L523.9,468.8" stroke="#b4b8e2" stroke-width="0.9" stroke-linecap="round"/>
<path d="M531.6,460.6 L522.5,466.8" stroke="#101226" stroke-width="2.4" stroke-linecap="round"/>
<path d="M531.6,460.6 L522.5,466.8" stroke="#b4b8e2" stroke-width="0.9" stroke-linecap="round"/>
<path d="M530.2,458.5 L521.1,464.7" stroke="#101226" stroke-width="2.4" stroke-linecap="round"/>
<path d="M530.2,458.5 L521.1,464.7" stroke="#b4b8e2" stroke-width="0.9" stroke-linecap="round"/>
<path d="M528.8,456.5 L519.7,462.6" stroke="#101226" stroke-width="2.4" stroke-linecap="round"/>
<path d="M528.8,456.5 L519.7,462.6" stroke="#b4b8e2" stroke-width="0.9" stroke-linecap="round"/>
<path d="M527.4,454.4 L518.3,460.5" stroke="#101226" stroke-width="2.4" stroke-linecap="round"/>
<path d="M527.4,454.4 L518.3,460.5" stroke="#b4b8e2" stroke-width="0.9" stroke-linecap="round"/>
<path d="M526.0,452.3 L516.9,458.5" stroke="#101226" stroke-width="2.4" stroke-linecap="round"/>
<path d="M526.0,452.3 L516.9,458.5" stroke="#b4b8e2" stroke-width="0.9" stroke-linecap="round"/>
<polygon points="577.5,393.9 581.5,399.9 545.8,432.6 539.8,424.7" fill="url(#g45)" stroke="#101226" stroke-width="0.9" stroke-linejoin="round"/>
<polygon points="525.9,436.6 539.8,424.7 547.7,432.6 532.9,448.5" fill="#b7bbe4" stroke="#101226" stroke-width="0.9" stroke-linejoin="round"/>
<path d="M529.0,441.0 L543.0,428.5" stroke="#101226" stroke-width="0.7" fill="none"/>
<polygon points="575.8,391.5 582.2,393.2 583.0,399.5 577.0,401.5" fill="#d6d9f6" stroke="#101226" stroke-width="0.7" stroke-linejoin="round"/>
<polygon points="578.1,401.0 582.9,415.8 586.3,414.6 581.5,399.8" fill="url(#g46)" stroke="#101226" stroke-width="0.6" stroke-linejoin="round"/>
<polygon points="566.6,444.5 574.5,440.6 584.2,454.8 579.2,461.0 572.0,458.0" fill="#b7bbe4" stroke="#101226" stroke-width="0.9" stroke-linejoin="round"/>
<circle cx="577.8" cy="454.3" r="2.8" fill="#878bb8" stroke="#101226" stroke-width="0.7"/>
<circle cx="577.8" cy="454.3" r="1.4" fill="#45486b" stroke="#101226" stroke-width="0.4"/>
<polygon points="600.9,438.9 610.4,428.9 608.0,426.5 598.4,436.5" fill="url(#g47)" stroke="#101226" stroke-width="0.6" stroke-linejoin="round"/>
<polygon points="586.9,456.8 602.5,440.5 596.7,434.9 581.1,451.2" fill="url(#g48)" stroke="#101226" stroke-width="0.8" stroke-linejoin="round"/>
<polygon points="617.1,412.5 575.8,444.5 565.5,431.3 606.8,399.2" fill="url(#g49)" stroke="#101226" stroke-width="0.9" stroke-linejoin="round"/>
<path d="M596.9,406.9 L607.2,420.2" stroke="#101226" stroke-width="0.7" fill="none"/>
<path d="M574.6,424.2 L584.9,437.5" stroke="#101226" stroke-width="0.7" fill="none"/>
<polygon points="563.0,447.0 537.6,465.8 528.4,453.3 553.8,434.5" fill="url(#g50)" stroke="#101226" stroke-width="0.9" stroke-linejoin="round"/>
<path d="M542.9,442.6 L552.1,455.1" stroke="#101226" stroke-width="0.7" fill="none"/>
<path d="M538.4,445.9 L547.6,458.4" stroke="#101226" stroke-width="0.7" fill="none"/>
<polygon points="554.7,432.6 565.6,424.7 576.5,432.6 577.5,440.6 564.6,444.5 556.7,440.6" fill="#b7bbe4" stroke="#101226" stroke-width="0.9" stroke-linejoin="round"/>
<polygon points="556.7,440.6 564.6,444.5 577.5,440.6 577.0,446.0 565.0,450.0 556.0,446.0" fill="#666a93" stroke="#101226" stroke-width="0.7" stroke-linejoin="round"/>
<circle cx="561.3" cy="435.1" r="4.4" fill="#b7bbe4" stroke="#101226" stroke-width="0.6"/>
<circle cx="561.3" cy="435.1" r="3" fill="#272942" stroke="#101226" stroke-width="0.6"/>
<circle cx="561.9" cy="435.7" r="1.6500000000000001" fill="#45486b" stroke="#101226" stroke-width="0"/>
<polygon points="622.0,400.0 640.0,392.0 668.0,398.0 672.0,412.0 660.0,424.0 632.0,424.0 618.0,414.0" fill="#45486b" stroke="#101226" stroke-width="0.9" stroke-linejoin="round"/>
<ellipse cx="647.3" cy="411.0" rx="10" ry="7" transform="rotate(-10 647.3 411.0)" fill="#0a0b15" stroke="#101226" stroke-width="0.6"/>
<ellipse cx="626.0" cy="412.5" rx="8" ry="5.6" transform="rotate(-35 626.0 412.5)" fill="#b7bbe4" stroke="#101226" stroke-width="0.8"/>
<ellipse cx="626.0" cy="412.5" rx="4.6" ry="3" transform="rotate(-35 626.0 412.5)" fill="#272942" stroke="#101226" stroke-width="0.5"/>
<ellipse cx="662.0" cy="410.0" rx="8" ry="5.6" transform="rotate(25 662.0 410.0)" fill="#9da1cd" stroke="#101226" stroke-width="0.8"/>
<ellipse cx="662.0" cy="410.0" rx="4.6" ry="3" transform="rotate(25 662.0 410.0)" fill="#272942" stroke="#101226" stroke-width="0.5"/>
<polygon points="619.8,349.3 628.6,357.0 637.4,346.0 647.3,352.6 656.2,352.1 660.6,354.8 661.7,365.9 660.6,371.4 671.6,372.5 681.5,379.1 683.0,389.5 672.5,392.0 671.6,405.6 666.1,412.2 651.7,397.5 638.5,400.5 623.1,416.6 617.6,405.6 602.1,397.5 600.5,388.0 609.0,381.0 617.6,376.9 620.9,368.1" fill="#9da1cd" stroke="#101226" stroke-width="1.0" stroke-linejoin="round"/>
<polygon points="628.6,357.0 637.4,346.0 647.3,352.6 648.6,365.0 631.9,368.3" fill="#b7bbe4" stroke="#101226" stroke-width="0.9" stroke-linejoin="round"/>
<polyline points="628.6,357.0 638.5,357.5 647.3,352.6" stroke="#101226" stroke-width="0.7" fill="none"/>
<polygon points="667.0,386.8 683.0,380.5 684.0,391.0 672.0,405.5" fill="#d6d9f6" stroke="#101226" stroke-width="0.9" stroke-linejoin="round"/>
<polygon points="671.6,372.5 681.5,379.1 667.0,386.8 660.6,371.4" fill="#878bb8" stroke="#101226" stroke-width="0.8" stroke-linejoin="round"/>
<polygon points="602.1,397.5 600.5,388.0 617.6,378.0 623.0,386.0 611.0,401.0" fill="#b7bbe4" stroke="#101226" stroke-width="0.9" stroke-linejoin="round"/>
<polygon points="617.6,405.6 611.0,401.0 623.0,386.0 634.0,398.0 623.1,416.6" fill="#878bb8" stroke="#101226" stroke-width="0.8" stroke-linejoin="round"/>
<polygon points="651.7,397.5 666.1,412.2 671.6,405.6 669.4,387.0" fill="#b7bbe4" stroke="#101226" stroke-width="0.8" stroke-linejoin="round"/>
<polygon points="648.6,365.0 660.6,354.8 661.7,365.9 660.6,371.4" fill="#878bb8" stroke="#101226" stroke-width="0.7" stroke-linejoin="round"/>
<ellipse cx="660.8" cy="360.5" rx="2.6" ry="5.4" transform="rotate(-8 660.8 360.5)" fill="#272942" stroke="#101226" stroke-width="0.6"/>
<polygon points="609.0,355.5 615.0,353.0 618.0,366.0 612.0,368.5" fill="#666a93" stroke="#101226" stroke-width="0.7" stroke-linejoin="round"/>
<polygon points="623.6,385.8 630.2,374.8 650.0,372.6 658.9,382.5 652.2,394.6 632.4,397.9" fill="#666a93" stroke="#101226" stroke-width="0.8" stroke-linejoin="round"/>
<polygon points="623.1,382.4 629.7,371.4 649.5,369.2 658.4,379.1 651.7,391.2 631.9,394.5" fill="#b7bbe4" stroke="#101226" stroke-width="0.9" stroke-linejoin="round"/>
<polygon points="625.9,382.2 631.5,373.0 648.1,371.1 655.6,379.5 649.9,389.6 633.3,392.4" fill="#9da1cd" stroke="#101226" stroke-width="0.6" stroke-linejoin="round"/>
<ellipse cx="640.7" cy="381.3" rx="11" ry="10" transform="rotate(0 640.7 381.3)" fill="#b7bbe4" stroke="#101226" stroke-width="0.8"/>
<ellipse cx="640.7" cy="381.3" rx="8.4" ry="7.6" transform="rotate(0 640.7 381.3)" fill="#9da1cd" stroke="#101226" stroke-width="0.6"/>
<ellipse cx="640.5" cy="381.5" rx="3.3" ry="3.1" transform="rotate(0 640.5 381.5)" fill="#272942" stroke="#101226" stroke-width="0.6"/>
<circle cx="676.5" cy="366.6" r="5" fill="#272942" stroke="#101226" stroke-width="0.8"/>
<circle cx="675.5" cy="365.6" r="2.75" fill="#666a93" stroke="#101226" stroke-width="0.4"/>
<circle cx="688.1" cy="381.5" r="4.6" fill="#272942" stroke="#101226" stroke-width="0.8"/>
<circle cx="687.1" cy="380.5" r="2.53" fill="#666a93" stroke="#101226" stroke-width="0.4"/>
<polygon points="531.0,441.0 545.0,430.5 553.0,440.0 540.0,452.0" fill="#878bb8" stroke="#101226" stroke-width="0.8" stroke-linejoin="round"/>
<polygon points="737.0,417.5 753.0,421.5 750.5,429.0 735.0,426.5" fill="#878bb8" stroke="#101226" stroke-width="0.8" stroke-linejoin="round"/>
<polygon points="559.0,505.0 573.0,504.0 573.0,512.5 560.0,513.0" fill="#878bb8" stroke="#101226" stroke-width="0.8" stroke-linejoin="round"/>
<polygon points="751.0,441.5 763.0,436.5 768.0,445.0 757.0,451.0" fill="#878bb8" stroke="#101226" stroke-width="0.8" stroke-linejoin="round"/>
<path d="M687.4,554.1 L689.7,559.3" stroke="#d6d9f6" stroke-width="0.7" fill="none"/>
<path d="M688.7,536.2 L685.6,537.9" stroke="#101226" stroke-width="0.7" fill="none"/>
<path d="M693.9,555.6 L693.2,560.8" stroke="#45486b" stroke-width="0.7" fill="none"/>
<path d="M679.5,527.3 L676.6,533.8" stroke="#d6d9f6" stroke-width="0.7" fill="none"/>
<path d="M683.5,537.0 L681.3,538.9" stroke="#d6d9f6" stroke-width="0.7" fill="none"/>
<path d="M708.1,541.1 L705.1,543.0" stroke="#d6d9f6" stroke-width="0.7" fill="none"/>
<path d="M681.3,511.1 L676.6,517.0" stroke="#45486b" stroke-width="0.7" fill="none"/>
<path d="M683.3,515.4 L680.5,515.8" stroke="#272942" stroke-width="0.7" fill="none"/>
<path d="M693.8,540.5 L699.9,545.4" stroke="#45486b" stroke-width="0.7" fill="none"/>
<path d="M690.4,511.4 L692.1,518.1" stroke="#d6d9f6" stroke-width="0.7" fill="none"/>
<path d="M674.2,551.0 L672.3,558.2" stroke="#101226" stroke-width="0.7" fill="none"/>
<path d="M702.0,514.7 L700.5,517.2" stroke="#272942" stroke-width="0.7" fill="none"/>
<path d="M710.1,529.5 L708.8,535.7" stroke="#101226" stroke-width="0.7" fill="none"/>
<path d="M668.7,515.8 L670.5,517.9" stroke="#45486b" stroke-width="0.7" fill="none"/>
<path d="M701.7,514.5 L708.3,516.3" stroke="#45486b" stroke-width="0.7" fill="none"/>
<path d="M688.9,532.8 L690.0,537.2" stroke="#101226" stroke-width="0.7" fill="none"/>
<path d="M705.6,540.6 L711.8,541.5" stroke="#272942" stroke-width="0.7" fill="none"/>
<path d="M662.3,527.2 L664.5,529.8" stroke="#101226" stroke-width="0.7" fill="none"/>
<path d="M683.4,541.7 L682.7,543.8" stroke="#101226" stroke-width="0.7" fill="none"/>
<path d="M699.8,532.5 L704.0,537.0" stroke="#272942" stroke-width="0.7" fill="none"/>
<path d="M676.1,558.4 L672.0,559.8" stroke="#45486b" stroke-width="0.7" fill="none"/>
<path d="M697.1,523.2 L691.5,525.7" stroke="#101226" stroke-width="0.7" fill="none"/>
<path d="M667.6,517.7 L667.5,522.3" stroke="#101226" stroke-width="0.7" fill="none"/>
<path d="M701.8,528.3 L704.5,531.1" stroke="#272942" stroke-width="0.7" fill="none"/>
<path d="M702.7,536.2 L702.2,538.3" stroke="#d6d9f6" stroke-width="0.7" fill="none"/>
<path d="M678.0,530.0 L676.3,533.6" stroke="#272942" stroke-width="0.7" fill="none"/>
<path d="M679.4,521.1 L675.5,526.2" stroke="#101226" stroke-width="0.7" fill="none"/>
<path d="M664.5,521.5 L668.7,521.8" stroke="#45486b" stroke-width="0.7" fill="none"/>
<path d="M679.9,554.2 L682.6,555.9" stroke="#272942" stroke-width="0.7" fill="none"/>
<path d="M693.4,523.9 L691.4,525.5" stroke="#101226" stroke-width="0.7" fill="none"/>
<path d="M707.2,531.2 L711.7,533.2" stroke="#272942" stroke-width="0.7" fill="none"/>
<path d="M686.8,546.2 L688.0,552.3" stroke="#101226" stroke-width="0.7" fill="none"/>
<path d="M665.6,520.0 L663.8,522.9" stroke="#101226" stroke-width="0.7" fill="none"/>
<path d="M705.6,545.8 L709.8,549.2" stroke="#272942" stroke-width="0.7" fill="none"/>
<path d="M687.4,543.9 L687.1,547.1" stroke="#d6d9f6" stroke-width="0.7" fill="none"/>
<path d="M691.6,547.5 L686.8,550.9" stroke="#d6d9f6" stroke-width="0.7" fill="none"/>
<path d="M680.7,542.7 L684.8,548.1" stroke="#272942" stroke-width="0.7" fill="none"/>
<path d="M665.8,539.6 L669.1,543.8" stroke="#101226" stroke-width="0.7" fill="none"/>
<path d="M695.0,530.1 L702.7,530.2" stroke="#d6d9f6" stroke-width="0.7" fill="none"/>
<path d="M703.1,533.6 L695.6,534.8" stroke="#101226" stroke-width="0.7" fill="none"/>
<path d="M703.2,538.5 L698.6,543.1" stroke="#272942" stroke-width="0.7" fill="none"/>
<path d="M662.4,528.3 L655.9,531.3" stroke="#272942" stroke-width="0.7" fill="none"/>
<path d="M695.4,543.8 L702.1,544.6" stroke="#d6d9f6" stroke-width="0.7" fill="none"/>
<path d="M707.9,523.7 L702.7,525.4" stroke="#101226" stroke-width="0.7" fill="none"/>
<path d="M677.0,536.1 L677.0,539.5" stroke="#101226" stroke-width="0.7" fill="none"/>
<path d="M669.5,532.4 L663.9,533.5" stroke="#272942" stroke-width="0.7" fill="none"/>
<path d="M704.1,553.2 L703.2,560.0" stroke="#101226" stroke-width="0.7" fill="none"/>
<path d="M679.1,544.3 L678.4,551.1" stroke="#101226" stroke-width="0.7" fill="none"/>
<path d="M686.9,548.6 L684.3,549.5" stroke="#101226" stroke-width="0.7" fill="none"/>
<path d="M666.4,536.5 L668.4,542.8" stroke="#101226" stroke-width="0.7" fill="none"/>
<path d="M683.8,553.8 L685.0,558.4" stroke="#101226" stroke-width="0.7" fill="none"/>
<path d="M700.3,517.1 L702.5,517.4" stroke="#45486b" stroke-width="0.7" fill="none"/>
<path d="M709.7,531.2 L714.6,532.5" stroke="#272942" stroke-width="0.7" fill="none"/>
<path d="M689.8,540.8 L691.4,544.9" stroke="#272942" stroke-width="0.7" fill="none"/>
<path d="M678.7,543.7 L680.1,546.1" stroke="#d6d9f6" stroke-width="0.7" fill="none"/>
<path d="M708.1,535.5 L703.8,538.7" stroke="#101226" stroke-width="0.7" fill="none"/>
<path d="M671.9,549.4 L668.5,552.1" stroke="#101226" stroke-width="0.7" fill="none"/>
<path d="M673.8,523.1 L675.7,527.7" stroke="#272942" stroke-width="0.7" fill="none"/>
<path d="M667.0,545.4 L667.4,548.8" stroke="#d6d9f6" stroke-width="0.7" fill="none"/>
<path d="M683.5,554.8 L680.8,556.8" stroke="#101226" stroke-width="0.7" fill="none"/>
<path d="M704.3,517.7 L707.1,524.6" stroke="#272942" stroke-width="0.7" fill="none"/>
<path d="M701.6,549.9 L695.3,551.1" stroke="#d6d9f6" stroke-width="0.7" fill="none"/>
<path d="M691.6,514.5 L688.0,518.5" stroke="#101226" stroke-width="0.7" fill="none"/>
<path d="M694.3,514.6 L694.6,518.0" stroke="#45486b" stroke-width="0.7" fill="none"/>
<path d="M693.6,537.2 L700.5,539.4" stroke="#101226" stroke-width="0.7" fill="none"/>
<path d="M692.4,521.2 L690.5,522.2" stroke="#101226" stroke-width="0.7" fill="none"/>
<path d="M675.0,513.9 L669.6,514.7" stroke="#101226" stroke-width="0.7" fill="none"/>
<path d="M708.2,540.1 L708.0,546.4" stroke="#101226" stroke-width="0.7" fill="none"/>
<path d="M678.3,532.2 L677.4,537.5" stroke="#d6d9f6" stroke-width="0.7" fill="none"/>
<path d="M689.1,541.6 L683.2,541.6" stroke="#45486b" stroke-width="0.7" fill="none"/>
<path d="M648.5,415.2 L649.3,417.7" stroke="#101226" stroke-width="0.7" fill="none"/>
<path d="M661.2,412.9 L664.9,417.6" stroke="#101226" stroke-width="0.7" fill="none"/>
<path d="M650.3,419.2 L652.1,421.3" stroke="#101226" stroke-width="0.7" fill="none"/>
<path d="M646.7,421.7 L651.3,422.1" stroke="#272942" stroke-width="0.7" fill="none"/>
<path d="M650.5,407.8 L653.0,411.5" stroke="#272942" stroke-width="0.7" fill="none"/>
<path d="M660.0,416.0 L657.9,419.5" stroke="#101226" stroke-width="0.7" fill="none"/>
<path d="M648.2,417.3 L643.0,418.2" stroke="#d6d9f6" stroke-width="0.7" fill="none"/>
<path d="M648.8,411.3 L651.8,415.1" stroke="#272942" stroke-width="0.7" fill="none"/>
<path d="M655.4,406.2 L656.6,410.4" stroke="#45486b" stroke-width="0.7" fill="none"/>
<path d="M639.7,413.5 L643.3,417.2" stroke="#101226" stroke-width="0.7" fill="none"/>
<path d="M661.6,414.3 L664.3,417.5" stroke="#45486b" stroke-width="0.7" fill="none"/>
<path d="M645.9,408.4 L644.7,410.3" stroke="#101226" stroke-width="0.7" fill="none"/>
<path d="M640.1,407.0 L643.2,409.1" stroke="#d6d9f6" stroke-width="0.7" fill="none"/>
<path d="M642.2,418.7 L639.9,419.5" stroke="#101226" stroke-width="0.7" fill="none"/>
<path d="M645.5,406.9 L644.1,412.2" stroke="#101226" stroke-width="0.7" fill="none"/>
<path d="M644.3,415.7 L644.6,417.8" stroke="#101226" stroke-width="0.7" fill="none"/>
<path d="M662.0,406.1 L658.0,410.4" stroke="#101226" stroke-width="0.7" fill="none"/>
<path d="M643.5,417.1 L647.6,419.2" stroke="#d6d9f6" stroke-width="0.7" fill="none"/>
<path d="M645.9,409.5 L643.8,414.7" stroke="#272942" stroke-width="0.7" fill="none"/>
<path d="M655.3,416.7 L652.0,417.1" stroke="#101226" stroke-width="0.7" fill="none"/>
<path d="M640.1,417.1 L642.2,421.9" stroke="#272942" stroke-width="0.7" fill="none"/>
<path d="M637.3,409.1 L641.8,412.6" stroke="#101226" stroke-width="0.7" fill="none"/>
<path d="M651.9,412.9 L656.0,415.2" stroke="#101226" stroke-width="0.7" fill="none"/>
<path d="M637.6,407.4 L636.7,410.6" stroke="#101226" stroke-width="0.7" fill="none"/>
<path d="M657.4,417.1 L654.7,419.4" stroke="#101226" stroke-width="0.7" fill="none"/>
<path d="M639.2,412.7 L639.8,414.7" stroke="#45486b" stroke-width="0.7" fill="none"/>
<path d="M672.4,467.3 L672.5,470.3" stroke="#101226" stroke-width="0.7" fill="none"/>
<path d="M676.4,482.1 L671.5,482.6" stroke="#272942" stroke-width="0.7" fill="none"/>
<path d="M669.2,470.8 L665.2,473.7" stroke="#45486b" stroke-width="0.7" fill="none"/>
<path d="M679.2,472.1 L683.3,473.3" stroke="#272942" stroke-width="0.7" fill="none"/>
<path d="M660.7,469.3 L664.2,470.3" stroke="#101226" stroke-width="0.7" fill="none"/>
<path d="M660.5,480.9 L663.9,484.3" stroke="#101226" stroke-width="0.7" fill="none"/>
<path d="M663.1,467.5 L665.2,468.2" stroke="#101226" stroke-width="0.7" fill="none"/>
<path d="M676.1,467.6 L676.3,472.9" stroke="#101226" stroke-width="0.7" fill="none"/>
<path d="M653.6,475.3 L650.6,479.5" stroke="#101226" stroke-width="0.7" fill="none"/>
<path d="M662.0,472.3 L662.8,475.7" stroke="#101226" stroke-width="0.7" fill="none"/>
<path d="M682.3,481.0 L682.1,483.5" stroke="#272942" stroke-width="0.7" fill="none"/>
<path d="M665.0,480.1 L665.1,482.6" stroke="#101226" stroke-width="0.7" fill="none"/>
<path d="M676.5,467.9 L676.3,470.7" stroke="#101226" stroke-width="0.7" fill="none"/>
<path d="M678.3,476.6 L674.0,477.9" stroke="#272942" stroke-width="0.7" fill="none"/>
<path d="M658.8,481.1 L661.7,484.9" stroke="#45486b" stroke-width="0.7" fill="none"/>
<path d="M679.0,478.2 L676.5,480.7" stroke="#45486b" stroke-width="0.7" fill="none"/>
<path d="M668.5,485.9 L664.1,487.4" stroke="#45486b" stroke-width="0.7" fill="none"/>
<path d="M652.5,479.0 L649.2,481.4" stroke="#45486b" stroke-width="0.7" fill="none"/>
<path d="M636.5,391.3 L635.4,393.4" stroke="#d6d9f6" stroke-width="0.6" fill="none"/>
<path d="M652.7,392.7 L649.7,393.5" stroke="#101226" stroke-width="0.6" fill="none"/>
<path d="M635.2,386.9 L639.1,388.1" stroke="#d6d9f6" stroke-width="0.6" fill="none"/>
<path d="M646.7,391.0 L644.1,397.2" stroke="#d6d9f6" stroke-width="0.6" fill="none"/>
<path d="M636.2,382.9 L639.8,386.0" stroke="#101226" stroke-width="0.6" fill="none"/>
<path d="M638.1,391.6 L641.4,392.9" stroke="#101226" stroke-width="0.6" fill="none"/>
<path d="M652.1,393.2 L654.1,394.6" stroke="#101226" stroke-width="0.6" fill="none"/>
<path d="M625.5,379.4 L625.6,384.1" stroke="#272942" stroke-width="0.6" fill="none"/>
<path d="M621.2,388.7 L622.6,391.6" stroke="#101226" stroke-width="0.6" fill="none"/>
<path d="M636.9,376.6 L635.8,381.1" stroke="#272942" stroke-width="0.6" fill="none"/>
<path d="M638.6,375.4 L636.0,375.6" stroke="#45486b" stroke-width="0.6" fill="none"/>
<path d="M646.0,394.1 L641.9,394.9" stroke="#101226" stroke-width="0.6" fill="none"/>
<path d="M641.4,371.4 L638.1,372.8" stroke="#272942" stroke-width="0.6" fill="none"/>
<path d="M627.4,377.3 L628.2,383.5" stroke="#272942" stroke-width="0.6" fill="none"/>
</svg><!--MODEL_END-->
<!--CUBE_START--><svg id="cube" width="1371" height="907" viewBox="0 0 1371 907" style="left:0;top:0;">
<defs><linearGradient id="gx" gradientUnits="userSpaceOnUse" x1="437.6" y1="786.6" x2="443.4" y2="793.6"><stop offset="0" stop-color="#7e2d38"/><stop offset="0.35" stop-color="#e2949c"/><stop offset="0.6" stop-color="#b24a56"/><stop offset="1" stop-color="#6e222c"/></linearGradient><linearGradient id="gz" gradientUnits="userSpaceOnUse" x1="443.6" y1="755.6" x2="438" y2="762"><stop offset="0" stop-color="#1a2c78"/><stop offset="0.4" stop-color="#3f61cc"/><stop offset="1" stop-color="#1c2f86"/></linearGradient><linearGradient id="gy" gradientUnits="userSpaceOnUse" x1="451.4" y1="763" x2="462" y2="760.4"><stop offset="0" stop-color="#2c6417"/><stop offset="0.35" stop-color="#4c8f2a"/><stop offset="1" stop-color="#1f4a10"/></linearGradient><radialGradient id="gs" gradientUnits="userSpaceOnUse" cx="455" cy="744" r="10"><stop offset="0" stop-color="#c9f0a8"/><stop offset="0.25" stop-color="#62b23a"/><stop offset="1" stop-color="#2d6a18"/></radialGradient></defs>
<polygon points="896.9,136.2 945.7,178.2 889.8,222.5 841.6,182" fill="#818181" stroke="#2a6d94" stroke-width="1" stroke-linejoin="round"/>
<polygon points="889.8,222.5 945.7,178.2 958.1,219.5 902.4,265.5" fill="#818181" stroke="#2a6d94" stroke-width="1" stroke-linejoin="round"/>
<polygon points="841.6,182 889.8,222.5 902.4,265.5 853.1,222.5" fill="#818181" stroke="#2a6d94" stroke-width="1" stroke-linejoin="round"/>
<text transform="matrix(0.4235,-0.351,0.766,0.643,882.4,199.6)" x="0" y="0" font-family="Liberation Sans, sans-serif" font-size="26.8" fill="#111">RIGHT</text>
<text transform="matrix(-0.784,0.621,-0.281,-0.960,947.6,196.6)" x="0" y="0" font-family="Liberation Sans, sans-serif" font-size="14.8" fill="#111">BOTTOM</text>
<text transform="matrix(-0.256,-0.543,0.766,0.643,882.6,243.8)" x="0" y="0" font-family="Liberation Sans, sans-serif" font-size="19.1" fill="#111">FRONT</text>
<polygon points="459.6,769.6 453,775 422.8,748.6 428.6,742.2" fill="url(#gz)"/>
<polygon points="419.1,738.8 433.7,738.2 434.4,743.8 426,753 420.3,750.8" fill="#2342a6"/><polygon points="419.1,738.8 433.7,738.2 433.9,740.2 419.4,741.2" fill="#0d1434"/><path d="M421,749 L426,752.6 L433.6,744" fill="none" stroke="#16266a" stroke-width="1.4"/>
<polygon points="456.6,771.2 464,778.4 426.4,808.4 420,801.2" fill="url(#gx)"/>
<polygon points="415.1,799 422,801.6 428.6,809.8 427.8,814.4 413.2,814.4" fill="#581a22"/><path d="M415.4,799.6 C420,800.6 426.4,806 428.4,810.6" fill="none" stroke="#8a3a44" stroke-width="1.2"/><polygon points="413.4,813 427.8,813 427.8,814.6 413.2,814.6" fill="#1c070a"/>
<polygon points="448.2,751.4 459,749 466,774.6 457.4,778.2" fill="url(#gy)"/>
<circle cx="452.3" cy="745.6" r="9.3" fill="url(#gs)"/>
</svg>
<div class="t" style="left:405.6px;top:721.4px;font-size:18px;line-height:22px;color:#3b5bc6;-webkit-text-stroke:0.45px #fff;">Z</div>
<div class="t" style="left:442.4px;top:720.2px;font-size:18px;line-height:22px;color:#5aa52e;-webkit-text-stroke:0.45px #fff;">Y</div>
<div class="t" style="left:397.4px;top:811.6px;font-size:17px;line-height:22px;color:#c43a4a;-webkit-text-stroke:0.45px #fff;">X</div><!--CUBE_END-->
<svg id="vtb" width="520" height="60" viewBox="420 805 520 60" style="left:420px;top:805px;">
<rect x="430" y="816.6" width="501.6" height="43" rx="6" fill="#fff" stroke="#6f6f6f" stroke-width="1.1"/>
<rect x="478.0" y="816.6" width="1.2" height="43" fill="#6f6f6f"/>
<rect x="580.0" y="816.6" width="1.2" height="43" fill="#6f6f6f"/>
<rect x="730.9" y="816.6" width="1.2" height="43" fill="#6f6f6f"/>
<rect x="833.9" y="816.6" width="1.2" height="43" fill="#6f6f6f"/>
<rect x="637.4" y="821.2" width="38" height="37.6" fill="#e9e9e9" opacity="0.7" rx="2"/>
<rect x="638.8" y="821.8" width="34.8" height="34.8" fill="#fff" stroke="#b5b5b5" stroke-width="1"/>
<path d="M604.6,821 L607.6,818.4 L610.6,821 Z" fill="#fff" stroke="#c4c4c4" stroke-width="0.9"/>
<path d="M652.6,821.6 L655.8,818.6 L659,821.6" fill="#fff" stroke="#c4c4c4" stroke-width="0.9"/>
<g fill="none" stroke="#878787" stroke-width="1.7" stroke-linejoin="round" stroke-linecap="round">
<path d="M435.6,836 L451.2,823.8 L466.8,836"/><path d="M439.4,834 V852.2 H462.2 V834"/><path d="M447,852 V840.2 H455.6 V852"/>
<path d="M511,824.2 L489.6,838 L511,851.8" stroke-linecap="butt"/><path d="M502.2,830.6 Q498.6,838 502.2,845.6 Q508.6,838 502.2,830.6 Z" stroke-width="1.1"/><path d="M503.6,833.6 Q505.4,838 503.6,842.6" stroke-width="0.9"/><path d="M508.6,838.1 H519" stroke-dasharray="1.8,1.5" stroke-width="1" stroke-linecap="butt"/>
<path d="M541.4,831.6 L546.6,824.6 Q547,824.1 548,824.1 H563.8 Q565.4,824.1 565.4,825.6 V843.4 L560,850.6" fill="#bdbdbd"/><path d="M541.4,831.6 L546.6,824.6 Q547,824.1 548,824.1 H563.8 Q565.2,824.1 564.4,825.4 L559.6,831.6 Z" fill="#f2f2f2"/><rect x="540.2" y="831.6" width="19.6" height="19.8" rx="2" fill="#dedede"/>
<path d="M608.2,839 L611.4,853.4 L614.2,850 L617.4,854.6 L619.6,853 L616.6,848.6 L620.8,847.6 Z" fill="#fff" stroke-width="1.9"/>
<path d="M646.8,828.8 L651.6,849.6 L655.6,844.6 L660.2,851 L663.2,848.8 L658.8,842.6 L665,841 Z" fill="#fff" stroke-width="2.1"/>
</g>
<g fill="none" stroke="#878787"><circle cx="703.9" cy="837.6" r="7.4" fill="#8a8a8a" stroke="none"/><ellipse cx="703.9" cy="837.6" rx="14.4" ry="8.2" stroke-width="3.4"/><ellipse cx="703.9" cy="837.6" rx="14.4" ry="8.2" stroke="#fff" stroke-width="1.2"/><ellipse cx="703.9" cy="837.6" rx="8.2" ry="14.4" stroke-width="3.4"/><ellipse cx="703.9" cy="837.6" rx="8.2" ry="14.4" stroke="#fff" stroke-width="1.2"/><path d="M699,843.6 H706.6 M704,840.8 L706.8,843.6 L704,846.4 M709.6,843 V835.6 M706.8,838.2 L709.6,835.4 L712.4,838.2" stroke="#fff" stroke-width="1.3"/></g>
<g fill="#fff" stroke="#878787" stroke-width="1.7" stroke-linejoin="round"><path d="M757.8,840 L746.6,835.4 V829.6 L757.8,834.2 L769,829.6 V835.4 Z" fill="#d9d9d9" stroke="none"/><path d="M746.4,829.6 L757.8,824.6 L769.2,829.6 L757.8,834.6 Z"/><path d="M745.6,836.2 L755.4,840.4 V851.4 L745.6,846.6 Z"/><path d="M770,836.2 L760.2,840.4 V851.4 L770,846.6 Z"/><path d="M755.4,845 L757.8,846.4 L760.2,845 V851 L757.8,849.6 L755.4,851 Z" fill="#c9c9c9" stroke="none"/></g>
<g><rect x="795.6" y="828.6" width="20.2" height="21.2" fill="#b5dcf0" stroke="#a3cfe6" stroke-width="0.6"/><path d="M795.2,834.6 L800,828 H816.6 Q817.6,828 817.6,829 V841.6 L812.8,847.6" fill="#8f8f8f" stroke="#7c7c7c" stroke-width="1.4" stroke-linejoin="round"/><path d="M795.4,834.6 L800.4,830.4 H814.6 L812.6,834.6 Z" fill="#fff" stroke="none"/><rect x="795.2" y="834.6" width="17.6" height="13.2" rx="1.6" fill="#fff" stroke="#7c7c7c" stroke-width="1.5"/><path d="M812.8,834.6 L816,830.6" stroke="#7c7c7c" stroke-width="1.2"/></g>
<g fill="none" stroke="#878787" stroke-width="1.9" stroke-linejoin="round"><path d="M847.2,847.4 V830.6 Q847.2,829.6 848.2,829.6 H852.4 L853.6,827.4 H866.4 L867.6,829.6 H871.8 Q872.8,829.6 872.8,830.6 V847.4 Z" fill="#fff"/><path d="M847.2,836.2 H853.6 M866.4,836.2 H872.8" stroke-width="1.3"/><circle cx="860" cy="837.8" r="5.9" fill="#fff"/></g>
<path d="M905.16,828.17 L905.49,824.41 L910.31,824.41 L910.64,828.17 L913.05,829.17 L915.95,826.75 L919.35,830.15 L916.93,833.05 L917.93,835.46 L921.69,835.79 L921.69,840.61 L917.93,840.94 L916.93,843.35 L919.35,846.25 L915.95,849.65 L913.05,847.23 L910.64,848.23 L910.31,851.99 L905.49,851.99 L905.16,848.23 L902.75,847.23 L899.85,849.65 L896.45,846.25 L898.87,843.35 L897.87,840.94 L894.11,840.61 L894.11,835.79 L897.87,835.46 L898.87,833.05 L896.45,830.15 L899.85,826.75 L902.75,829.17Z" fill="#fff" stroke="#878787" stroke-width="1.7" stroke-linejoin="round"/><circle cx="907.9" cy="838.2" r="5.4" fill="#fff" stroke="#878787" stroke-width="1.7"/>
</svg>
<div class="t" id="va" style="left:590.2px;top:813.3px;font-size:25.5px;line-height:36px;color:#858585;-webkit-text-stroke:0.3px #858585;">a</div>
<!--/CENTER-->
<!--RIGHT-->
<div class="abs" style="left:1005px;top:102px;width:333px;height:772px;border:1px solid #d0d0d0;background:#fff;box-sizing:border-box;"></div>
<div class="abs" style="left:1006px;top:849px;width:331px;height:24px;background:#d6d6d6;"></div>
<div class="abs" style="left:1006px;top:849px;width:40px;height:24px;background:#fff;"></div>
<div class="abs" style="left:1007px;top:163px;width:330px;height:686px;border:1px solid #d0d0d0;background:#fff;box-sizing:border-box;"></div>
<div class="abs" style="left:1026px;top:164px;width:310px;height:28px;border:1px solid #d4d4d4;border-top:none;border-right:none;background:#fff;box-sizing:border-box;"></div>
<div class="abs" style="left:1046px;top:192px;width:290px;height:25px;background:#dedede;"></div>
<div class="t" id="r0" style="left:1014.1px;top:110.6px;font-size:17.5px;color:#8a8a8a;line-height:20px;-webkit-text-stroke:0.3px #fff;letter-spacing:-0.7px;">Views</div>
<div class="t" id="r1" style="left:1032.0px;top:169.7px;font-size:12px;letter-spacing:0px;">3D CAD Assembly - Helico Rotor - A</div>
<div class="t" id="r2" style="left:1052.4px;top:197.6px;font-size:12px;letter-spacing:-0.1px;">Master View</div>
<div class="t" id="r3" style="left:1011.4px;top:853.6px;font-size:12px;color:#1e6fc8;letter-spacing:-0.2px;">Views</div>
<div class="t" id="r4" style="left:1052.2px;top:853.6px;font-size:12px;letter-spacing:-0.35px;">Part Tree</div>
<svg id="rsvg" width="340" height="120" viewBox="1000 105 340 120" style="left:1000px;top:105px;">
<g fill="#555"><rect x="1318.3" y="115.3" width="4.6" height="4.8"/><rect x="1317.3" y="119.8" width="6.6" height="1.1"/><rect x="1320.1" y="120.6" width="1" height="3.3"/><rect x="1319.2" y="115.8" width="0.9" height="4" fill="#ccc"/></g>
<circle cx="1199.7" cy="146.8" r="7.4" fill="#000"/><path d="M1195.3,146.8 H1204.1 M1199.7,142.4 V151.2" stroke="#fff" stroke-width="2.4"/>
<circle cx="1229.7" cy="146.8" r="7.4" fill="#000"/><path d="M1225.2,146.8 H1234.2" stroke="#fff" stroke-width="2.4"/>
<rect x="1245.3" y="139" width="1.5" height="15.4" fill="#c8c8c8"/>
<g fill="none" stroke="#000"><circle cx="1257.2" cy="142.6" r="2.1" stroke-width="1.4"/><circle cx="1266.2" cy="142.6" r="2.1" stroke-width="1.4"/><path d="M1258.4,144.4 L1264.6,153.8 M1265,144.4 L1258.8,153.8" stroke-width="1.7"/></g>
<g fill="#000"><path d="M1289.6,139.9 H1294.8 L1299,144 V151.9 H1289.6 Z"/><path d="M1284.3,141.9 H1289.8 L1294.1,146 V153.8 H1284.3 Z" stroke="#fff" stroke-width="0.9"/><path d="M1284.3,141.9 H1289.8 L1294.1,146 V153.8 H1284.3 Z"/></g><path d="M1290,142.6 L1293.6,146.2 M1295,140.6 L1298.4,144" stroke="#bbb" stroke-width="0.7"/>
<g><rect x="1316.2" y="141.4" width="9.6" height="12" fill="#e4e4e4" stroke="#d2d2d2" stroke-width="0.8"/><rect x="1319" y="139.6" width="4" height="2.6" fill="#e0e0e0" stroke="#d2d2d2" stroke-width="0.7"/><rect x="1319.4" y="144.4" width="8.2" height="9.4" fill="#f4f4f4" stroke="#dcdcdc" stroke-width="0.8"/></g>
<path d="M1014.3,180.8 H1020 V175.2 Z" fill="#595959"/>
<g><path d="M1314.2,211.2 L1315.4,206.8 L1323.6,198.6 L1326.8,201.8 L1318.6,210 Z" fill="#000"/><path d="M1324.4,197.8 L1325.4,196.8 C1326.6,196 1329.2,198.6 1328.4,199.8 L1327.4,200.8 Z" fill="#000"/></g>
</svg>
<!--/RIGHT-->
</div>
</body>
</html>
